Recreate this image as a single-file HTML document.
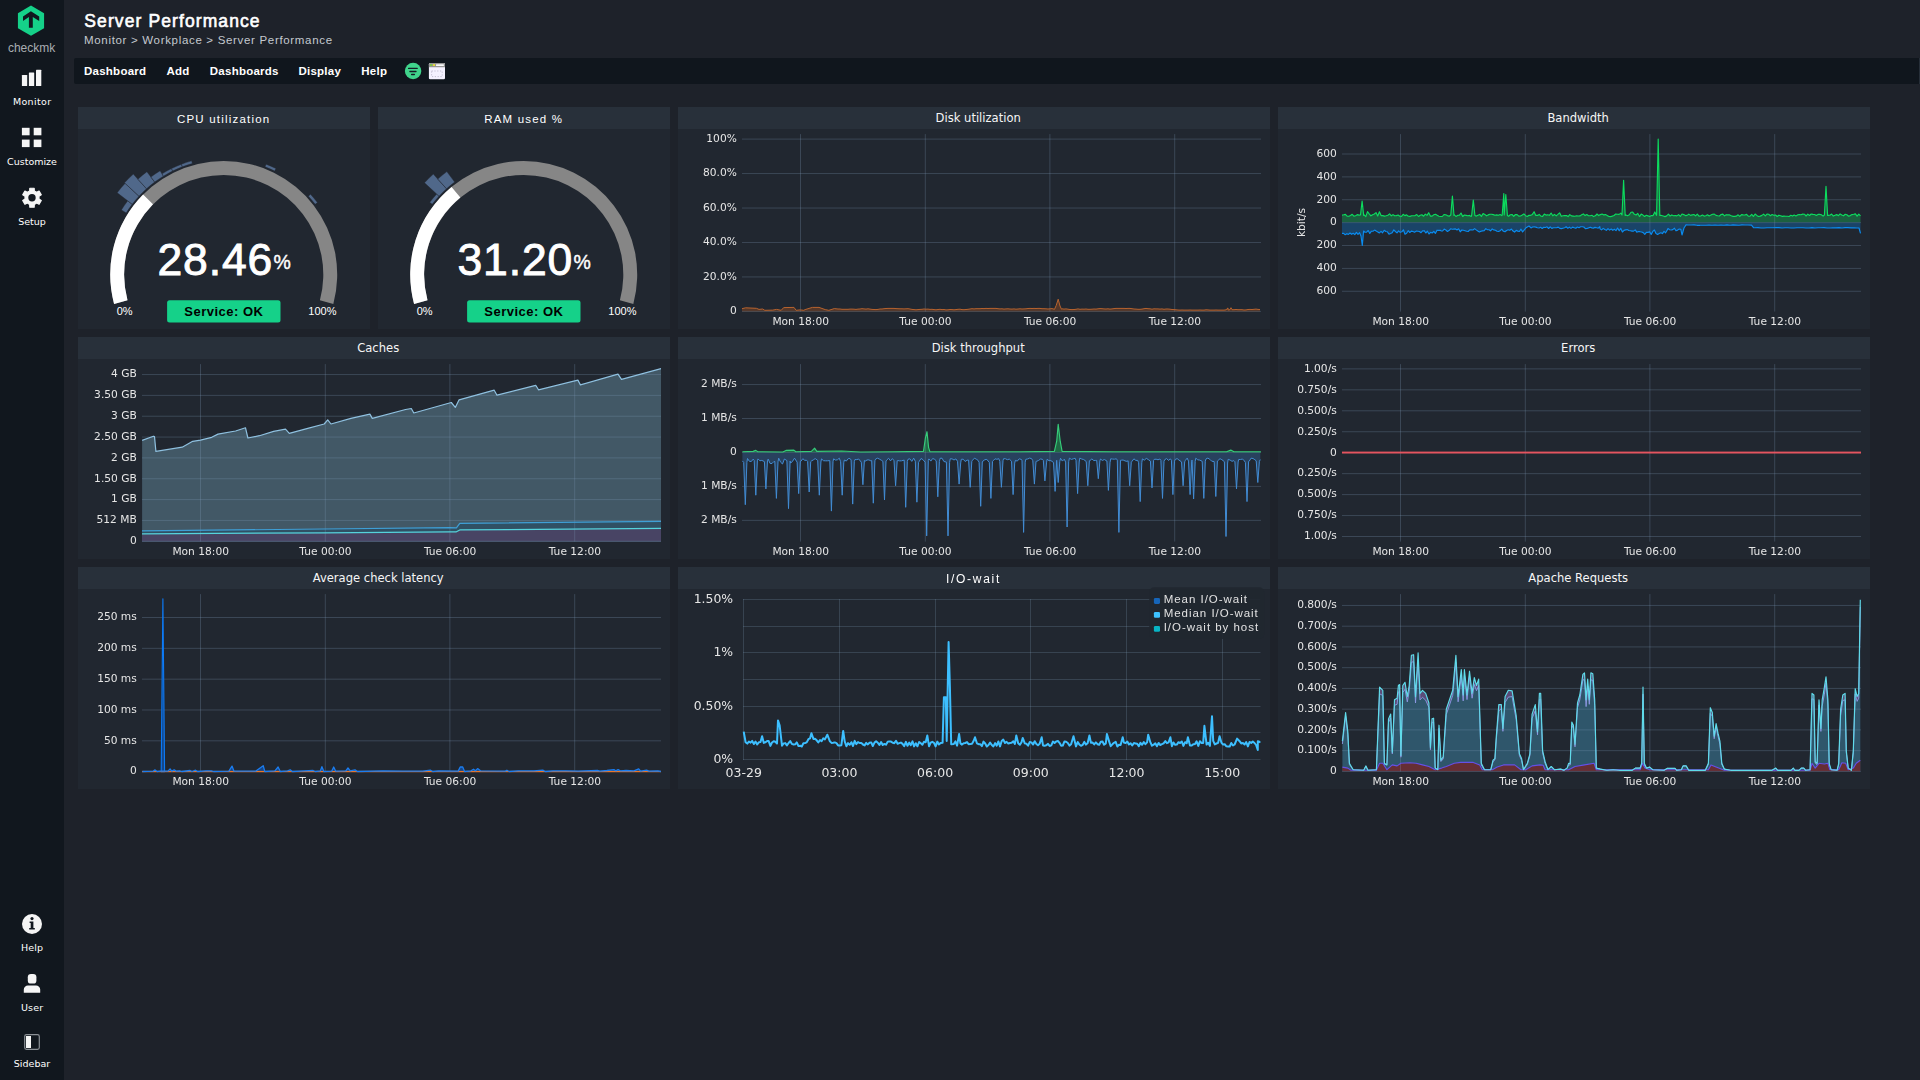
<!DOCTYPE html>
<html lang="en"><head><meta charset="utf-8"><title>Server Performance</title>
<style>
html,body{margin:0;padding:0;}
body{width:1920px;height:1080px;overflow:hidden;background:#1e222a;position:relative;font-family:"Liberation Sans", sans-serif;color:#fff;}
.abs{position:absolute;}
#side{left:0;top:0;width:64px;height:1080px;background:#11171e;}
.sl{position:absolute;left:0;width:64px;text-align:center;font-family:"DejaVu Sans", sans-serif;font-size:9.5px;line-height:12px;color:#fff;letter-spacing:0;}
#title{left:84.3px;top:9.6px;font-size:17.5px;line-height:22px;font-weight:normal;-webkit-text-stroke:0.6px #fff;letter-spacing:1.1px;white-space:nowrap;}
#crumb{left:84px;top:33px;font-size:11.5px;line-height:14px;color:#c4c9cf;letter-spacing:0.68px;white-space:nowrap;}
#menu{left:74px;top:58px;width:1844.8px;height:26px;background:#10161d;border-radius:2px 0 0 2px;}
.mi{position:absolute;top:64px;font-size:11.5px;line-height:14px;font-weight:bold;letter-spacing:0.25px;white-space:nowrap;}
.dl{position:absolute;background:#212730;}
.dt{position:absolute;left:0;top:0;right:0;height:22px;background:#28303a;line-height:22px;text-align:center;text-indent:8.4px;font-family:"DejaVu Sans",sans-serif;font-size:11.55px;color:#f6f6f6;white-space:nowrap;}
svg{position:absolute;left:0;top:0;}
.gt{position:absolute;width:600.4px;height:22px;line-height:22px;text-align:center;font-family:"DejaVu Sans", sans-serif;font-size:11.55px;color:#f6f6f6;white-space:nowrap;}
svg.cv{will-change:transform;}

</style></head><body>
<div id="side" class="abs"></div>
<div class="sl" style="top:96.0px;letter-spacing:0.35px;text-indent:0.35px">Monitor</div>
<div class="sl" style="top:156.0px;letter-spacing:0.00px;text-indent:0.00px">Customize</div>
<div class="sl" style="top:216.0px;letter-spacing:0.00px;text-indent:0.00px">Setup</div>
<div class="sl" style="top:942.0px;letter-spacing:0.15px;text-indent:0.15px">Help</div>
<div class="sl" style="top:1002.0px;letter-spacing:0.15px;text-indent:0.15px">User</div>
<div class="sl" style="top:1058.0px;letter-spacing:0.00px;text-indent:0.00px">Sidebar</div>
<div id="title" class="abs">Server Performance</div>
<div id="crumb" class="abs">Monitor &gt; Workplace &gt; Server Performance</div>
<div id="menu" class="abs"></div>
<div class="abs" style="left:1919px;top:58px;width:1px;height:26px;background:#262e38"></div>
<div class="mi" style="left:84.0px">Dashboard</div>
<div class="mi" style="left:166.5px">Add</div>
<div class="mi" style="left:209.8px">Dashboards</div>
<div class="mi" style="left:298.4px">Display</div>
<div class="mi" style="left:361.3px">Help</div>
<div class="dl" style="left:78px;top:107px;width:292px;height:222px"><div class="dt"></div></div>
<div class="dl" style="left:378px;top:107px;width:292px;height:222px"><div class="dt"></div></div>
<div class="dl" style="left:678px;top:107px;width:592px;height:222px"><div class="dt">Disk utilization</div></div>
<div class="dl" style="left:1278px;top:107px;width:592px;height:222px"><div class="dt">Bandwidth</div></div>
<div class="dl" style="left:78px;top:337px;width:592px;height:222px"><div class="dt">Caches</div></div>
<div class="dl" style="left:678px;top:337px;width:592px;height:222px"><div class="dt">Disk throughput</div></div>
<div class="dl" style="left:1278px;top:337px;width:592px;height:222px"><div class="dt">Errors</div></div>
<div class="dl" style="left:78px;top:567px;width:592px;height:222px"><div class="dt">Average check latency</div></div>
<div class="dl" style="left:678px;top:567px;width:592px;height:222px"><div class="dt"></div></div>
<div class="dl" style="left:1278px;top:567px;width:592px;height:222px"><div class="dt">Apache Requests</div></div>
<svg width="1920" height="1080" viewBox="0 0 1920 1080">
<polygon points="31.00,5.60 44.08,13.15 44.08,28.25 31.00,35.80 17.92,28.25 17.92,13.15" fill="#15d189"/>
<path d="M23,16.6 L30.9,11.3 L39.2,16.6 L39.2,20.9 L32.8,16.9 L32.8,27.8 L28.9,27.8 L28.9,16.9 L23,20.9 Z" fill="#11171e"/>
<text x="31.60" y="51.80" font-family='"Liberation Sans", sans-serif' font-size="12" text-anchor="middle" fill="#a9adb2" font-weight="normal" >checkmk</text>
<rect x="21.9" y="75.0" width="5.3" height="11.1" rx="0.6" fill="#f5f5f5"/>
<rect x="28.9" y="72.5" width="5.3" height="13.6" rx="0.6" fill="#f5f5f5"/>
<rect x="36.0" y="69.7" width="5.3" height="16.4" rx="0.6" fill="#f5f5f5"/>
<rect x="21.9" y="127.8" width="7.7" height="7.5" fill="#f5f5f5"/>
<rect x="21.9" y="139.6" width="7.7" height="7.5" fill="#f5f5f5"/>
<rect x="33.7" y="127.8" width="7.7" height="7.5" fill="#f5f5f5"/>
<rect x="33.7" y="139.6" width="7.7" height="7.5" fill="#f5f5f5"/>
<polygon points="29.69,190.99 29.82,188.25 34.18,188.25 34.31,190.99 36.66,192.34 39.09,191.08 41.28,194.86 38.97,196.35 38.97,199.05 41.28,200.54 39.09,204.32 36.66,203.06 34.31,204.41 34.18,207.15 29.82,207.15 29.69,204.41 27.34,203.06 24.91,204.32 22.72,200.54 25.03,199.05 25.03,196.35 22.72,194.86 24.91,191.08 27.34,192.34" fill="#f5f5f5" stroke="#f5f5f5" stroke-width="1.2" stroke-linejoin="round"/>
<circle cx="32.0" cy="197.7" r="3.7" fill="#11171e"/>
<circle cx="32" cy="924" r="10" fill="#f5f5f5"/>
<circle cx="32" cy="918.6" r="1.6" fill="#11171e"/>
<path d="M29.6,921.6 h3.8 v6.3 h1.4 v1.5 h-5.6 v-1.5 h1.5 v-4.8 h-1.1 z" fill="#11171e"/>
<rect x="27.8" y="974" width="8.6" height="9.6" rx="3.2" fill="#f5f5f5"/>
<path d="M23.8,992.8 v-3.2 a4.2,4.2 0 0 1 4.2,-4.2 h8 a4.2,4.2 0 0 1 4.2,4.2 v3.2 z" fill="#f5f5f5"/>
<rect x="24.7" y="1034.7" width="14.6" height="14.6" rx="1.8" fill="none" stroke="#8a8f95" stroke-width="1.2"/>
<rect x="26" y="1036" width="5" height="12" fill="#f5f5f5"/>
<circle cx="413.1" cy="71" r="8.2" fill="#40d48c"/>
<line x1="408.6" y1="68.4" x2="417.2" y2="68.4" stroke="#161d26" stroke-width="1.3" stroke-linecap="round"/>
<line x1="409.9" y1="71.5" x2="416.0" y2="71.5" stroke="#161d26" stroke-width="1.3" stroke-linecap="round"/>
<line x1="411.6" y1="74.5" x2="414.4" y2="74.5" stroke="#161d26" stroke-width="1.3" stroke-linecap="round"/>
<rect x="428.9" y="63" width="16.1" height="16.3" rx="1.3" fill="#f4f1ff"/>
<path d="M428.9,67.2 v-2.9 a1.3,1.3 0 0 1 1.3,-1.3 h13.5 a1.3,1.3 0 0 1 1.3,1.3 v2.9 z" fill="#969696"/>
<rect x="430" y="64.1" width="2.1" height="1.9" fill="#7bc24a"/>
<rect x="432.9" y="64.1" width="2.2" height="1.9" fill="#e8d93c"/>
<rect x="436" y="64.2" width="7.9" height="1.8" rx="0.5" fill="#f8f8f8"/>
<rect x="431.6" y="71" width="10.6" height="5.6" fill="none" stroke="#bdb9cc" stroke-width="0.9" stroke-dasharray="1.2,1.6"/>
<path d="M114.07,303.88 A113.50,113.50 0 1 1 333.33,303.88 L319.91,300.28 A99.60,99.60 0 1 0 127.49,300.28 Z" fill="#868686"/>
<path d="M114.07,303.88 A113.50,113.50 0 0 1 143.12,194.57 L152.99,204.36 A99.60,99.60 0 0 0 127.49,300.28 Z" fill="#ffffff"/>
<path d="M121.37,209.93 A121.00,121.00 0 0 1 127.70,200.84 L132.23,204.31 A115.30,115.30 0 0 0 126.19,212.97 Z" fill="#50688a" stroke="#212730" stroke-width="0.45"/>
<path d="M117.15,192.74 A134.30,134.30 0 0 1 125.08,183.34 L139.03,196.23 A115.30,115.30 0 0 0 132.23,204.31 Z" fill="#50688a" stroke="#212730" stroke-width="0.45"/>
<path d="M124.49,182.79 A135.10,135.10 0 0 1 133.30,174.10 L146.55,188.82 A115.30,115.30 0 0 0 139.03,196.23 Z" fill="#50688a" stroke="#212730" stroke-width="0.45"/>
<path d="M137.85,179.15 A128.30,128.30 0 0 1 146.93,171.70 L154.71,182.12 A115.30,115.30 0 0 0 146.55,188.82 Z" fill="#50688a" stroke="#212730" stroke-width="0.45"/>
<path d="M150.88,176.99 A121.70,121.70 0 0 1 160.11,170.73 L163.46,176.19 A115.30,115.30 0 0 0 154.71,182.12 Z" fill="#50688a" stroke="#212730" stroke-width="0.45"/>
<path d="M161.99,173.80 A118.10,118.10 0 0 1 171.47,168.58 L172.70,171.09 A115.30,115.30 0 0 0 163.46,176.19 Z" fill="#50688a" stroke="#212730" stroke-width="0.45"/>
<path d="M171.47,168.58 A118.10,118.10 0 0 1 181.38,164.24 L182.38,166.86 A115.30,115.30 0 0 0 172.70,171.09 Z" fill="#50688a" stroke="#212730" stroke-width="0.45"/>
<path d="M181.38,164.24 A118.10,118.10 0 0 1 191.64,160.83 L192.40,163.53 A115.30,115.30 0 0 0 182.38,166.86 Z" fill="#50688a" stroke="#212730" stroke-width="0.45"/>
<path d="M266.06,164.15 A118.20,118.20 0 0 1 275.98,168.49 L274.70,171.09 A115.30,115.30 0 0 0 265.02,166.86 Z" fill="#50688a" stroke="#212730" stroke-width="0.45"/>
<path d="M310.50,194.27 A118.20,118.20 0 0 1 317.47,202.54 L315.17,204.31 A115.30,115.30 0 0 0 308.37,196.23 Z" fill="#50688a" stroke="#212730" stroke-width="0.45"/>
<text x="157.4" y="275.2" font-family='"Liberation Sans", sans-serif' font-size="44.5" fill="#fff" stroke="#fff" stroke-width="0.9" text-anchor="start" letter-spacing="0.9">28.46<tspan font-size="19.5" dx="0.3" dy="-6.4" letter-spacing="0" stroke-width="0.4">%</tspan></text>
<text x="124.70" y="314.90" font-family='"Liberation Sans", sans-serif' font-size="11" text-anchor="middle" fill="#fff" font-weight="normal" >0%</text>
<text x="322.40" y="314.90" font-family='"Liberation Sans", sans-serif' font-size="11" text-anchor="middle" fill="#fff" font-weight="normal" >100%</text>
<rect x="167.1" y="300.2" width="113.4" height="22.2" rx="2.5" fill="#15d189"/>
<text x="223.90" y="315.80" font-family='"Liberation Sans", sans-serif' font-size="13" text-anchor="middle" fill="#000" font-weight="bold" letter-spacing="0.5">Service: OK</text>
<path d="M414.07,303.88 A113.50,113.50 0 1 1 633.33,303.88 L619.91,300.28 A99.60,99.60 0 1 0 427.49,300.28 Z" fill="#868686"/>
<path d="M414.07,303.88 A113.50,113.50 0 0 1 451.54,186.90 L460.37,197.62 A99.60,99.60 0 0 0 427.49,300.28 Z" fill="#ffffff"/>
<path d="M429.69,202.36 A118.50,118.50 0 0 1 436.68,194.06 L439.03,196.23 A115.30,115.30 0 0 0 432.23,204.31 Z" fill="#50688a" stroke="#212730" stroke-width="0.45"/>
<path d="M424.49,182.79 A135.10,135.10 0 0 1 433.30,174.10 L446.55,188.82 A115.30,115.30 0 0 0 439.03,196.23 Z" fill="#50688a" stroke="#212730" stroke-width="0.45"/>
<path d="M437.78,179.08 A128.40,128.40 0 0 1 446.88,171.62 L454.71,182.12 A115.30,115.30 0 0 0 446.55,188.82 Z" fill="#50688a" stroke="#212730" stroke-width="0.45"/>
<text x="457.4" y="275.2" font-family='"Liberation Sans", sans-serif' font-size="44.5" fill="#fff" stroke="#fff" stroke-width="0.9" text-anchor="start" letter-spacing="0.9">31.20<tspan font-size="19.5" dx="0.3" dy="-6.4" letter-spacing="0" stroke-width="0.4">%</tspan></text>
<text x="424.70" y="314.90" font-family='"Liberation Sans", sans-serif' font-size="11" text-anchor="middle" fill="#fff" font-weight="normal" >0%</text>
<text x="622.40" y="314.90" font-family='"Liberation Sans", sans-serif' font-size="11" text-anchor="middle" fill="#fff" font-weight="normal" >100%</text>
<rect x="467.1" y="300.2" width="113.4" height="22.2" rx="2.5" fill="#15d189"/>
<text x="523.90" y="315.80" font-family='"Liberation Sans", sans-serif' font-size="13" text-anchor="middle" fill="#000" font-weight="bold" letter-spacing="0.5">Service: OK</text>
<text x="223.70" y="122.80" font-family='"Liberation Sans", sans-serif' font-size="11.5" text-anchor="middle" fill="#fff" font-weight="normal" letter-spacing="1.2">CPU utilization</text>
<text x="523.70" y="122.80" font-family='"Liberation Sans", sans-serif' font-size="11.5" text-anchor="middle" fill="#fff" font-weight="normal" letter-spacing="1.2">RAM used %</text>

</svg>
<svg class="cv" width="1920" height="1080" viewBox="0 0 1920 1080">
<text x="800.70" y="324.60" font-family='"DejaVu Sans", sans-serif' font-size="10.667" text-anchor="middle" fill="#e6e6e6" font-weight="normal" >Mon 18:00</text>
<text x="925.50" y="324.60" font-family='"DejaVu Sans", sans-serif' font-size="10.667" text-anchor="middle" fill="#e6e6e6" font-weight="normal" >Tue 00:00</text>
<text x="1050.10" y="324.60" font-family='"DejaVu Sans", sans-serif' font-size="10.667" text-anchor="middle" fill="#e6e6e6" font-weight="normal" >Tue 06:00</text>
<text x="1174.90" y="324.60" font-family='"DejaVu Sans", sans-serif' font-size="10.667" text-anchor="middle" fill="#e6e6e6" font-weight="normal" >Tue 12:00</text>
<text x="736.80" y="141.90" font-family='"DejaVu Sans", sans-serif' font-size="10.667" text-anchor="end" fill="#e6e6e6" font-weight="normal" >100%</text>
<text x="736.80" y="176.36" font-family='"DejaVu Sans", sans-serif' font-size="10.667" text-anchor="end" fill="#e6e6e6" font-weight="normal" >80.0%</text>
<text x="736.80" y="210.82" font-family='"DejaVu Sans", sans-serif' font-size="10.667" text-anchor="end" fill="#e6e6e6" font-weight="normal" >60.0%</text>
<text x="736.80" y="245.28" font-family='"DejaVu Sans", sans-serif' font-size="10.667" text-anchor="end" fill="#e6e6e6" font-weight="normal" >40.0%</text>
<text x="736.80" y="279.74" font-family='"DejaVu Sans", sans-serif' font-size="10.667" text-anchor="end" fill="#e6e6e6" font-weight="normal" >20.0%</text>
<text x="736.80" y="313.70" font-family='"DejaVu Sans", sans-serif' font-size="10.667" text-anchor="end" fill="#e6e6e6" font-weight="normal" >0</text>
<polygon points="742.0,311.4 742.0,308.7 745.5,307.8 756.4,308.3 759.0,309.4 762.6,309.0 764.8,310.3 772.8,310.1 776.5,309.4 781.2,310.3 783.7,307.6 794.0,307.4 796.1,310.3 800.2,309.9 803.8,310.3 805.1,309.6 812.4,307.4 819.0,307.4 825.2,309.6 828.8,310.3 834.3,308.6 838.0,309.0 840.0,309.0 842.0,309.3 844.0,309.3 846.0,309.3 848.0,309.3 850.0,309.1 852.0,309.1 854.0,309.2 856.0,309.4 858.0,309.1 860.0,309.0 862.0,308.7 864.0,308.9 866.0,309.1 868.0,308.8 870.0,309.1 872.0,309.4 874.0,309.5 876.0,309.6 878.0,309.4 880.0,309.0 882.0,309.0 884.0,308.7 886.0,308.5 888.0,308.4 890.0,308.4 892.0,308.4 894.0,308.4 896.0,308.6 898.0,308.7 900.0,308.8 902.0,308.8 904.0,308.9 906.0,308.8 908.0,308.7 910.0,309.0 912.0,309.4 914.0,309.6 916.0,309.8 918.0,309.6 920.0,309.4 922.0,309.3 924.0,309.0 926.0,309.2 928.0,309.1 930.0,309.4 932.0,309.3 934.0,309.6 936.0,309.8 938.0,309.5 940.0,309.3 942.0,309.6 944.0,309.5 946.0,309.9 948.0,309.8 950.0,309.5 952.0,309.6 954.0,309.8 956.0,309.6 958.0,309.3 960.0,309.2 962.0,309.6 964.0,309.7 966.0,309.5 968.0,309.3 970.0,309.0 972.0,308.7 974.0,308.9 976.0,308.7 978.0,308.7 980.0,308.7 982.0,308.5 984.0,308.6 986.0,308.4 988.0,308.5 990.0,308.4 992.0,308.4 994.0,308.4 996.0,308.4 998.0,308.7 1000.0,308.9 1002.0,308.8 1004.0,309.1 1006.0,308.9 1008.0,308.8 1010.0,309.0 1012.0,309.1 1014.0,308.9 1016.0,309.2 1018.0,309.0 1020.0,308.8 1022.0,309.0 1024.0,308.9 1026.0,308.8 1028.0,308.5 1030.0,308.4 1032.0,308.5 1034.0,308.4 1036.0,308.5 1038.0,308.4 1040.0,308.4 1042.0,308.7 1044.0,308.7 1046.0,308.8 1048.0,309.0 1050.0,308.8 1052.0,308.6 1054.5,309.3 1056.2,305.5 1058.2,299.2 1060.0,306.0 1061.5,309.2 1062.0,308.8 1064.0,309.1 1066.0,308.9 1068.0,309.2 1070.0,309.5 1072.0,309.6 1074.0,309.5 1076.0,309.3 1078.0,308.9 1080.0,309.3 1082.0,309.1 1084.0,309.2 1086.0,309.0 1088.0,309.3 1090.0,309.3 1092.0,309.2 1094.0,309.0 1096.0,309.1 1098.0,308.8 1100.0,308.6 1102.0,308.7 1104.0,308.9 1106.0,309.0 1108.0,308.8 1110.0,309.1 1112.0,308.9 1114.0,308.6 1116.0,308.4 1118.0,308.4 1120.0,308.4 1122.0,308.4 1124.0,308.4 1126.0,308.5 1128.0,308.4 1130.0,308.4 1132.0,308.7 1134.0,309.0 1136.0,309.1 1138.0,309.3 1140.0,309.3 1142.0,309.1 1144.0,308.7 1146.0,308.4 1148.0,308.7 1150.0,308.8 1152.0,309.2 1154.0,308.8 1156.0,308.9 1158.0,308.9 1160.0,309.1 1162.0,308.9 1164.0,309.3 1166.0,309.0 1168.0,309.0 1170.0,309.2 1172.0,309.5 1174.0,309.6 1176.0,309.8 1178.0,310.0 1180.0,310.1 1182.0,310.0 1184.0,310.1 1186.0,310.1 1188.0,310.1 1190.0,310.0 1192.0,310.1 1194.0,310.1 1196.0,310.1 1198.0,310.1 1200.0,310.0 1202.0,310.1 1204.0,310.1 1206.0,309.8 1208.0,309.9 1210.0,310.1 1212.0,310.1 1214.0,310.1 1216.0,310.0 1218.0,310.1 1220.0,310.1 1222.0,310.1 1224.0,310.1 1226.0,309.8 1228.0,307.9 1228.0,310.0 1230.0,309.7 1231.0,307.7 1232.0,309.7 1234.0,309.7 1236.0,309.5 1238.0,309.7 1240.0,309.7 1242.0,309.7 1244.0,310.0 1246.0,309.9 1248.0,309.5 1250.0,309.4 1252.0,309.5 1254.0,309.3 1256.0,309.1 1258.0,309.4 1260.0,309.5 1260.0,311.4" fill="#6b3e27" fill-opacity="0.7"/>
<line x1="800.50" y1="134.1" x2="800.50" y2="311.6" stroke="rgba(130,160,190,0.27)" stroke-width="1"/>
<line x1="925.30" y1="134.1" x2="925.30" y2="311.6" stroke="rgba(130,160,190,0.27)" stroke-width="1"/>
<line x1="1049.90" y1="134.1" x2="1049.90" y2="311.6" stroke="rgba(130,160,190,0.27)" stroke-width="1"/>
<line x1="1174.70" y1="134.1" x2="1174.70" y2="311.6" stroke="rgba(130,160,190,0.27)" stroke-width="1"/>
<line x1="742" y1="139.10" x2="1261" y2="139.10" stroke="rgba(130,160,190,0.27)" stroke-width="1"/>
<line x1="742" y1="173.56" x2="1261" y2="173.56" stroke="rgba(130,160,190,0.27)" stroke-width="1"/>
<line x1="742" y1="208.02" x2="1261" y2="208.02" stroke="rgba(130,160,190,0.27)" stroke-width="1"/>
<line x1="742" y1="242.48" x2="1261" y2="242.48" stroke="rgba(130,160,190,0.27)" stroke-width="1"/>
<line x1="742" y1="276.94" x2="1261" y2="276.94" stroke="rgba(130,160,190,0.27)" stroke-width="1"/>
<line x1="742" y1="311.40" x2="1261" y2="311.40" stroke="rgba(130,160,190,0.27)" stroke-width="1"/>
<polyline points="742.0,308.7 745.5,307.8 756.4,308.3 759.0,309.4 762.6,309.0 764.8,310.3 772.8,310.1 776.5,309.4 781.2,310.3 783.7,307.6 794.0,307.4 796.1,310.3 800.2,309.9 803.8,310.3 805.1,309.6 812.4,307.4 819.0,307.4 825.2,309.6 828.8,310.3 834.3,308.6 838.0,309.0 840.0,309.0 842.0,309.3 844.0,309.3 846.0,309.3 848.0,309.3 850.0,309.1 852.0,309.1 854.0,309.2 856.0,309.4 858.0,309.1 860.0,309.0 862.0,308.7 864.0,308.9 866.0,309.1 868.0,308.8 870.0,309.1 872.0,309.4 874.0,309.5 876.0,309.6 878.0,309.4 880.0,309.0 882.0,309.0 884.0,308.7 886.0,308.5 888.0,308.4 890.0,308.4 892.0,308.4 894.0,308.4 896.0,308.6 898.0,308.7 900.0,308.8 902.0,308.8 904.0,308.9 906.0,308.8 908.0,308.7 910.0,309.0 912.0,309.4 914.0,309.6 916.0,309.8 918.0,309.6 920.0,309.4 922.0,309.3 924.0,309.0 926.0,309.2 928.0,309.1 930.0,309.4 932.0,309.3 934.0,309.6 936.0,309.8 938.0,309.5 940.0,309.3 942.0,309.6 944.0,309.5 946.0,309.9 948.0,309.8 950.0,309.5 952.0,309.6 954.0,309.8 956.0,309.6 958.0,309.3 960.0,309.2 962.0,309.6 964.0,309.7 966.0,309.5 968.0,309.3 970.0,309.0 972.0,308.7 974.0,308.9 976.0,308.7 978.0,308.7 980.0,308.7 982.0,308.5 984.0,308.6 986.0,308.4 988.0,308.5 990.0,308.4 992.0,308.4 994.0,308.4 996.0,308.4 998.0,308.7 1000.0,308.9 1002.0,308.8 1004.0,309.1 1006.0,308.9 1008.0,308.8 1010.0,309.0 1012.0,309.1 1014.0,308.9 1016.0,309.2 1018.0,309.0 1020.0,308.8 1022.0,309.0 1024.0,308.9 1026.0,308.8 1028.0,308.5 1030.0,308.4 1032.0,308.5 1034.0,308.4 1036.0,308.5 1038.0,308.4 1040.0,308.4 1042.0,308.7 1044.0,308.7 1046.0,308.8 1048.0,309.0 1050.0,308.8 1052.0,308.6 1054.5,309.3 1056.2,305.5 1058.2,299.2 1060.0,306.0 1061.5,309.2 1062.0,308.8 1064.0,309.1 1066.0,308.9 1068.0,309.2 1070.0,309.5 1072.0,309.6 1074.0,309.5 1076.0,309.3 1078.0,308.9 1080.0,309.3 1082.0,309.1 1084.0,309.2 1086.0,309.0 1088.0,309.3 1090.0,309.3 1092.0,309.2 1094.0,309.0 1096.0,309.1 1098.0,308.8 1100.0,308.6 1102.0,308.7 1104.0,308.9 1106.0,309.0 1108.0,308.8 1110.0,309.1 1112.0,308.9 1114.0,308.6 1116.0,308.4 1118.0,308.4 1120.0,308.4 1122.0,308.4 1124.0,308.4 1126.0,308.5 1128.0,308.4 1130.0,308.4 1132.0,308.7 1134.0,309.0 1136.0,309.1 1138.0,309.3 1140.0,309.3 1142.0,309.1 1144.0,308.7 1146.0,308.4 1148.0,308.7 1150.0,308.8 1152.0,309.2 1154.0,308.8 1156.0,308.9 1158.0,308.9 1160.0,309.1 1162.0,308.9 1164.0,309.3 1166.0,309.0 1168.0,309.0 1170.0,309.2 1172.0,309.5 1174.0,309.6 1176.0,309.8 1178.0,310.0 1180.0,310.1 1182.0,310.0 1184.0,310.1 1186.0,310.1 1188.0,310.1 1190.0,310.0 1192.0,310.1 1194.0,310.1 1196.0,310.1 1198.0,310.1 1200.0,310.0 1202.0,310.1 1204.0,310.1 1206.0,309.8 1208.0,309.9 1210.0,310.1 1212.0,310.1 1214.0,310.1 1216.0,310.0 1218.0,310.1 1220.0,310.1 1222.0,310.1 1224.0,310.1 1226.0,309.8 1228.0,307.9 1228.0,310.0 1230.0,309.7 1231.0,307.7 1232.0,309.7 1234.0,309.7 1236.0,309.5 1238.0,309.7 1240.0,309.7 1242.0,309.7 1244.0,310.0 1246.0,309.9 1248.0,309.5 1250.0,309.4 1252.0,309.5 1254.0,309.3 1256.0,309.1 1258.0,309.4 1260.0,309.5" fill="none" stroke="#b8642f" stroke-width="1.0" stroke-linejoin="round" />
<text x="1400.70" y="324.60" font-family='"DejaVu Sans", sans-serif' font-size="10.667" text-anchor="middle" fill="#e6e6e6" font-weight="normal" >Mon 18:00</text>
<text x="1525.50" y="324.60" font-family='"DejaVu Sans", sans-serif' font-size="10.667" text-anchor="middle" fill="#e6e6e6" font-weight="normal" >Tue 00:00</text>
<text x="1650.10" y="324.60" font-family='"DejaVu Sans", sans-serif' font-size="10.667" text-anchor="middle" fill="#e6e6e6" font-weight="normal" >Tue 06:00</text>
<text x="1774.90" y="324.60" font-family='"DejaVu Sans", sans-serif' font-size="10.667" text-anchor="middle" fill="#e6e6e6" font-weight="normal" >Tue 12:00</text>
<text x="1336.80" y="156.80" font-family='"DejaVu Sans", sans-serif' font-size="10.667" text-anchor="end" fill="#e6e6e6" font-weight="normal" >600</text>
<text x="1336.80" y="179.68" font-family='"DejaVu Sans", sans-serif' font-size="10.667" text-anchor="end" fill="#e6e6e6" font-weight="normal" >400</text>
<text x="1336.80" y="202.56" font-family='"DejaVu Sans", sans-serif' font-size="10.667" text-anchor="end" fill="#e6e6e6" font-weight="normal" >200</text>
<text x="1336.80" y="225.44" font-family='"DejaVu Sans", sans-serif' font-size="10.667" text-anchor="end" fill="#e6e6e6" font-weight="normal" >0</text>
<text x="1336.80" y="248.32" font-family='"DejaVu Sans", sans-serif' font-size="10.667" text-anchor="end" fill="#e6e6e6" font-weight="normal" >200</text>
<text x="1336.80" y="271.20" font-family='"DejaVu Sans", sans-serif' font-size="10.667" text-anchor="end" fill="#e6e6e6" font-weight="normal" >400</text>
<text x="1336.80" y="294.08" font-family='"DejaVu Sans", sans-serif' font-size="10.667" text-anchor="end" fill="#e6e6e6" font-weight="normal" >600</text>
<text transform="translate(1305.3,222.5) rotate(-90)" font-family='"DejaVu Sans", sans-serif' font-size="10.667" text-anchor="middle" fill="#e6e6e6">kbit/s</text>
<polygon points="1342.0,222.6 1342.0,215.1 1343.7,214.8 1345.4,214.4 1347.1,216.1 1348.8,216.3 1350.5,215.5 1352.2,214.3 1353.9,216.2 1355.6,215.8 1357.3,214.6 1359.0,215.1 1360.5,215.0 1362.1,201.0 1363.7,215.5 1364.1,214.8 1365.8,216.6 1367.5,211.6 1369.2,213.8 1370.9,215.8 1372.6,214.7 1374.3,214.0 1376.0,212.6 1377.7,216.1 1379.4,211.8 1381.1,215.6 1382.8,215.6 1384.5,216.1 1386.2,215.7 1387.9,215.2 1389.6,213.9 1391.3,215.8 1393.0,214.6 1394.7,215.8 1396.4,215.6 1398.1,215.0 1399.8,216.3 1401.5,216.4 1403.2,214.3 1404.9,215.6 1406.6,214.9 1408.3,216.3 1410.0,216.4 1411.7,215.7 1413.4,215.8 1415.1,215.6 1416.8,214.5 1418.5,216.5 1420.2,215.3 1421.9,214.8 1423.6,216.2 1425.3,214.1 1427.0,215.4 1428.7,212.7 1430.4,216.1 1432.1,216.1 1433.8,214.8 1435.5,214.3 1437.2,215.3 1438.9,216.2 1440.6,216.5 1442.3,216.5 1444.0,214.5 1445.7,214.7 1447.4,215.6 1449.1,216.2 1450.8,215.0 1452.4,196.0 1454.0,215.5 1454.2,214.5 1455.9,216.5 1457.6,215.4 1459.3,215.3 1461.0,213.0 1462.7,216.5 1464.4,215.0 1466.1,215.4 1467.8,215.8 1469.5,215.4 1471.2,216.5 1471.7,215.0 1473.3,200.0 1474.9,215.5 1476.3,216.1 1478.0,215.2 1479.7,214.4 1481.4,216.4 1483.1,213.5 1484.8,214.4 1486.5,215.8 1488.2,214.9 1489.9,214.2 1491.6,214.2 1493.3,214.6 1495.0,215.3 1496.7,214.9 1498.4,215.3 1500.1,214.5 1501.8,215.6 1502.2,215.0 1503.8,193.5 1504.2,215.0 1505.8,194.5 1507.4,215.5 1508.6,216.3 1510.3,214.8 1512.0,214.5 1513.7,216.3 1515.4,214.5 1517.1,214.6 1518.8,216.1 1520.5,216.0 1522.2,215.0 1523.9,213.9 1525.6,215.7 1527.3,216.5 1529.0,215.3 1530.7,215.3 1532.4,214.4 1534.1,211.7 1535.8,215.4 1537.5,215.4 1539.2,214.4 1540.9,216.2 1542.6,216.4 1544.3,214.1 1546.0,215.1 1547.7,214.8 1549.4,215.3 1551.1,213.0 1552.8,215.8 1554.5,214.4 1556.2,215.9 1557.9,214.4 1559.6,212.8 1561.3,216.3 1563.0,215.8 1564.7,215.6 1566.4,215.5 1568.1,216.6 1569.8,214.6 1571.5,215.9 1573.2,216.1 1574.9,216.3 1576.6,215.8 1578.3,216.0 1580.0,215.9 1581.7,214.8 1583.4,213.9 1585.1,215.6 1586.8,214.5 1588.5,215.7 1590.2,215.7 1591.9,215.3 1593.6,216.6 1595.3,215.8 1597.0,214.0 1598.7,215.6 1600.4,214.6 1602.1,214.0 1603.8,214.9 1605.5,214.6 1607.2,215.4 1608.9,216.5 1610.6,216.6 1612.3,216.1 1614.0,215.5 1615.7,214.0 1617.4,214.3 1619.1,214.4 1620.8,213.1 1622.0,215.0 1623.6,180.4 1625.2,215.5 1625.9,214.9 1627.6,215.7 1629.3,214.7 1631.0,212.2 1632.7,212.1 1634.4,214.3 1636.1,215.0 1637.8,213.4 1639.5,216.6 1641.2,214.1 1642.9,215.1 1644.6,216.5 1646.3,215.3 1648.0,215.9 1649.7,216.5 1651.4,215.5 1653.1,215.6 1654.8,211.9 1656.5,215.3 1656.6,215.0 1658.2,139.0 1659.8,215.5 1659.9,215.1 1661.6,215.5 1663.3,216.0 1665.0,216.6 1666.7,215.9 1668.4,214.2 1670.1,216.0 1671.8,214.9 1673.5,215.7 1675.2,215.5 1676.9,215.9 1678.6,214.6 1680.3,216.4 1682.0,214.0 1683.7,214.6 1685.4,215.6 1687.1,215.4 1688.8,214.1 1690.5,215.4 1692.2,214.9 1693.9,214.5 1695.6,215.9 1697.3,214.1 1699.0,216.1 1700.7,216.0 1702.4,215.0 1704.1,216.1 1705.8,215.7 1707.5,214.8 1709.2,215.9 1710.9,215.1 1712.6,214.2 1714.3,214.1 1716.0,215.4 1717.7,215.8 1719.4,216.0 1721.1,214.5 1722.8,214.1 1724.5,215.9 1726.2,214.7 1727.9,214.9 1729.6,214.9 1731.3,215.8 1733.0,216.4 1734.7,216.4 1736.4,216.1 1738.1,214.8 1739.8,216.4 1741.5,214.6 1743.2,214.9 1744.9,215.0 1746.6,214.4 1748.3,216.1 1750.0,216.2 1751.7,214.4 1753.4,216.3 1755.1,214.0 1756.8,215.4 1758.5,216.5 1760.2,216.1 1761.9,215.4 1763.6,214.1 1765.3,215.9 1767.0,214.1 1768.7,214.3 1770.4,215.7 1772.1,214.5 1773.8,215.3 1775.5,215.0 1777.2,216.5 1778.9,215.2 1780.6,215.8 1782.3,216.4 1784.0,216.1 1785.7,216.2 1787.4,216.2 1789.1,216.5 1790.8,215.3 1792.5,216.1 1794.2,215.0 1795.9,215.9 1797.6,214.9 1799.3,214.5 1801.0,214.7 1802.7,214.1 1804.4,214.2 1806.1,216.0 1807.8,214.1 1809.5,215.5 1811.2,214.0 1812.9,214.4 1814.6,214.5 1816.3,215.5 1818.0,214.4 1819.7,214.4 1821.4,214.7 1823.1,216.1 1824.4,215.0 1826.0,186.4 1827.6,215.5 1828.2,215.4 1829.9,215.2 1831.6,214.0 1833.3,216.1 1835.0,215.3 1836.7,214.6 1838.4,215.7 1840.1,213.9 1841.8,214.9 1843.5,215.8 1845.2,214.3 1846.9,214.8 1848.6,216.2 1850.3,215.6 1852.0,214.6 1853.7,214.3 1855.4,213.9 1857.1,216.2 1858.8,214.1 1860.5,215.8 1860.5,222.6" fill="#1c6040" fill-opacity="1"/>
<polygon points="1342.0,222.6 1342.0,233.4 1343.6,233.4 1345.2,234.7 1346.8,233.7 1348.4,234.4 1350.0,233.0 1351.6,234.3 1353.2,233.3 1354.8,234.6 1356.4,232.4 1358.0,234.3 1359.6,232.7 1361.0,236.0 1362.3,245.5 1363.6,231.0 1365.0,232.2 1366.6,232.1 1368.2,230.5 1369.8,233.5 1371.4,231.2 1373.0,231.2 1374.6,230.1 1376.2,231.1 1377.8,231.9 1379.4,232.9 1381.0,231.4 1382.6,232.8 1384.2,230.3 1385.8,231.5 1387.4,231.8 1389.0,234.1 1390.6,233.5 1392.2,232.7 1393.8,229.9 1395.4,231.5 1397.0,232.9 1398.6,230.8 1400.2,232.3 1401.8,231.8 1403.4,229.8 1405.0,234.2 1406.6,233.3 1408.2,230.7 1409.8,232.5 1411.4,231.1 1413.0,231.5 1414.6,232.2 1416.2,231.1 1417.8,231.3 1419.4,231.5 1421.0,232.7 1422.6,230.9 1424.2,230.7 1425.8,233.0 1427.4,231.2 1429.0,234.0 1430.6,232.3 1432.2,233.0 1433.8,231.3 1435.4,233.4 1437.0,230.2 1438.6,230.4 1440.2,230.2 1441.0,230.9 1442.6,231.0 1444.2,229.1 1445.8,229.9 1447.4,231.5 1449.0,230.6 1450.6,228.8 1452.2,229.3 1453.8,229.1 1455.4,228.9 1457.0,230.0 1458.6,228.8 1460.2,231.8 1461.8,230.0 1463.4,230.3 1465.0,230.8 1466.6,231.3 1468.2,231.5 1469.8,229.9 1471.4,229.7 1473.0,230.0 1474.6,228.6 1476.2,229.9 1477.8,231.0 1479.4,232.0 1481.0,231.3 1482.6,230.9 1484.2,230.7 1485.8,228.6 1487.4,229.7 1489.0,229.7 1490.6,230.8 1492.2,228.9 1493.8,229.9 1495.4,230.3 1497.0,231.3 1498.6,231.5 1500.2,230.7 1501.8,229.1 1503.4,231.3 1505.0,231.8 1506.6,230.5 1508.2,229.8 1509.8,230.3 1511.4,229.0 1513.0,231.1 1514.6,232.1 1516.2,230.4 1517.8,231.1 1519.4,231.5 1521.0,229.2 1522.6,231.9 1526.0,227.8 1529.0,226.0 1531.0,227.9 1532.6,227.0 1534.2,226.8 1535.8,227.1 1537.4,227.8 1539.0,228.0 1540.6,227.3 1542.2,228.5 1543.8,227.3 1545.4,227.5 1547.0,226.8 1548.6,228.5 1550.2,226.9 1551.8,228.4 1553.4,227.7 1555.0,227.7 1556.6,227.7 1558.2,227.1 1559.8,228.4 1561.4,228.6 1563.0,228.2 1564.6,227.8 1566.2,226.8 1567.8,228.2 1569.4,227.2 1571.0,228.4 1572.6,227.1 1574.2,227.7 1575.8,228.3 1577.4,227.0 1579.0,227.7 1580.6,226.8 1582.2,226.7 1583.8,227.0 1585.4,228.6 1587.0,228.5 1588.6,227.9 1590.2,227.2 1591.8,227.9 1593.4,228.1 1595.0,227.4 1596.6,227.8 1598.2,228.2 1599.8,226.6 1600.0,228.7 1601.6,229.9 1603.2,228.4 1604.8,229.5 1606.4,230.3 1608.0,228.6 1609.6,230.1 1611.2,229.0 1612.8,230.3 1614.4,229.3 1616.0,230.6 1617.6,228.0 1619.2,230.8 1620.8,228.4 1622.4,232.0 1624.0,230.4 1625.6,229.9 1627.2,229.6 1628.8,230.5 1630.4,230.8 1632.0,231.1 1633.6,231.1 1635.2,229.9 1636.8,232.2 1638.4,231.5 1640.0,231.6 1640.0,231.8 1641.6,232.0 1643.2,232.6 1644.8,234.4 1646.4,232.4 1648.0,232.4 1649.6,231.9 1651.2,234.4 1652.8,231.4 1654.4,230.0 1656.0,233.5 1657.6,234.4 1659.2,233.5 1660.8,232.8 1662.4,233.6 1664.0,231.3 1665.6,232.8 1667.2,230.1 1668.0,228.5 1669.6,229.8 1671.2,230.0 1672.8,229.6 1674.4,228.2 1676.0,230.8 1677.6,230.1 1679.2,229.0 1680.8,229.2 1682.0,235.0 1684.0,228.0 1686.0,224.9 1688.0,225.0 1691.0,225.0 1694.0,224.9 1697.0,225.3 1700.0,225.3 1703.0,225.2 1706.0,225.3 1709.0,225.1 1712.0,225.3 1715.0,225.0 1718.0,225.2 1721.0,225.1 1724.0,225.3 1727.0,224.9 1730.0,225.2 1733.0,224.9 1736.0,225.1 1739.0,225.3 1742.0,224.9 1745.0,225.0 1748.0,225.0 1751.5,225.1 1753.5,227.7 1755.0,227.7 1758.0,227.6 1761.0,228.0 1764.0,228.0 1767.0,227.7 1770.0,227.7 1773.0,227.8 1776.0,227.6 1779.0,227.6 1782.0,228.0 1785.0,227.7 1788.0,227.8 1791.0,228.0 1794.0,228.0 1797.0,227.8 1800.0,227.7 1803.0,227.7 1806.0,228.0 1809.0,228.0 1812.0,227.6 1815.0,228.0 1818.0,227.7 1821.0,227.8 1824.0,227.6 1827.0,228.0 1830.0,228.0 1833.0,227.7 1836.0,227.9 1839.0,227.6 1842.0,228.0 1845.0,227.6 1848.0,227.6 1851.0,227.9 1854.0,227.7 1857.0,228.0 1859.0,228.0 1860.5,233.4 1860.5,222.6" fill="#1a4468" fill-opacity="1"/>
<line x1="1400.50" y1="134.1" x2="1400.50" y2="311.6" stroke="rgba(130,160,190,0.27)" stroke-width="1"/>
<line x1="1525.30" y1="134.1" x2="1525.30" y2="311.6" stroke="rgba(130,160,190,0.27)" stroke-width="1"/>
<line x1="1649.90" y1="134.1" x2="1649.90" y2="311.6" stroke="rgba(130,160,190,0.27)" stroke-width="1"/>
<line x1="1774.70" y1="134.1" x2="1774.70" y2="311.6" stroke="rgba(130,160,190,0.27)" stroke-width="1"/>
<line x1="1342" y1="154.00" x2="1861" y2="154.00" stroke="rgba(130,160,190,0.27)" stroke-width="1"/>
<line x1="1342" y1="176.88" x2="1861" y2="176.88" stroke="rgba(130,160,190,0.27)" stroke-width="1"/>
<line x1="1342" y1="199.76" x2="1861" y2="199.76" stroke="rgba(130,160,190,0.27)" stroke-width="1"/>
<line x1="1342" y1="222.64" x2="1861" y2="222.64" stroke="rgba(130,160,190,0.27)" stroke-width="1"/>
<line x1="1342" y1="245.52" x2="1861" y2="245.52" stroke="rgba(130,160,190,0.27)" stroke-width="1"/>
<line x1="1342" y1="268.40" x2="1861" y2="268.40" stroke="rgba(130,160,190,0.27)" stroke-width="1"/>
<line x1="1342" y1="291.28" x2="1861" y2="291.28" stroke="rgba(130,160,190,0.27)" stroke-width="1"/>
<polyline points="1342.0,215.1 1343.7,214.8 1345.4,214.4 1347.1,216.1 1348.8,216.3 1350.5,215.5 1352.2,214.3 1353.9,216.2 1355.6,215.8 1357.3,214.6 1359.0,215.1 1360.5,215.0 1362.1,201.0 1363.7,215.5 1364.1,214.8 1365.8,216.6 1367.5,211.6 1369.2,213.8 1370.9,215.8 1372.6,214.7 1374.3,214.0 1376.0,212.6 1377.7,216.1 1379.4,211.8 1381.1,215.6 1382.8,215.6 1384.5,216.1 1386.2,215.7 1387.9,215.2 1389.6,213.9 1391.3,215.8 1393.0,214.6 1394.7,215.8 1396.4,215.6 1398.1,215.0 1399.8,216.3 1401.5,216.4 1403.2,214.3 1404.9,215.6 1406.6,214.9 1408.3,216.3 1410.0,216.4 1411.7,215.7 1413.4,215.8 1415.1,215.6 1416.8,214.5 1418.5,216.5 1420.2,215.3 1421.9,214.8 1423.6,216.2 1425.3,214.1 1427.0,215.4 1428.7,212.7 1430.4,216.1 1432.1,216.1 1433.8,214.8 1435.5,214.3 1437.2,215.3 1438.9,216.2 1440.6,216.5 1442.3,216.5 1444.0,214.5 1445.7,214.7 1447.4,215.6 1449.1,216.2 1450.8,215.0 1452.4,196.0 1454.0,215.5 1454.2,214.5 1455.9,216.5 1457.6,215.4 1459.3,215.3 1461.0,213.0 1462.7,216.5 1464.4,215.0 1466.1,215.4 1467.8,215.8 1469.5,215.4 1471.2,216.5 1471.7,215.0 1473.3,200.0 1474.9,215.5 1476.3,216.1 1478.0,215.2 1479.7,214.4 1481.4,216.4 1483.1,213.5 1484.8,214.4 1486.5,215.8 1488.2,214.9 1489.9,214.2 1491.6,214.2 1493.3,214.6 1495.0,215.3 1496.7,214.9 1498.4,215.3 1500.1,214.5 1501.8,215.6 1502.2,215.0 1503.8,193.5 1504.2,215.0 1505.8,194.5 1507.4,215.5 1508.6,216.3 1510.3,214.8 1512.0,214.5 1513.7,216.3 1515.4,214.5 1517.1,214.6 1518.8,216.1 1520.5,216.0 1522.2,215.0 1523.9,213.9 1525.6,215.7 1527.3,216.5 1529.0,215.3 1530.7,215.3 1532.4,214.4 1534.1,211.7 1535.8,215.4 1537.5,215.4 1539.2,214.4 1540.9,216.2 1542.6,216.4 1544.3,214.1 1546.0,215.1 1547.7,214.8 1549.4,215.3 1551.1,213.0 1552.8,215.8 1554.5,214.4 1556.2,215.9 1557.9,214.4 1559.6,212.8 1561.3,216.3 1563.0,215.8 1564.7,215.6 1566.4,215.5 1568.1,216.6 1569.8,214.6 1571.5,215.9 1573.2,216.1 1574.9,216.3 1576.6,215.8 1578.3,216.0 1580.0,215.9 1581.7,214.8 1583.4,213.9 1585.1,215.6 1586.8,214.5 1588.5,215.7 1590.2,215.7 1591.9,215.3 1593.6,216.6 1595.3,215.8 1597.0,214.0 1598.7,215.6 1600.4,214.6 1602.1,214.0 1603.8,214.9 1605.5,214.6 1607.2,215.4 1608.9,216.5 1610.6,216.6 1612.3,216.1 1614.0,215.5 1615.7,214.0 1617.4,214.3 1619.1,214.4 1620.8,213.1 1622.0,215.0 1623.6,180.4 1625.2,215.5 1625.9,214.9 1627.6,215.7 1629.3,214.7 1631.0,212.2 1632.7,212.1 1634.4,214.3 1636.1,215.0 1637.8,213.4 1639.5,216.6 1641.2,214.1 1642.9,215.1 1644.6,216.5 1646.3,215.3 1648.0,215.9 1649.7,216.5 1651.4,215.5 1653.1,215.6 1654.8,211.9 1656.5,215.3 1656.6,215.0 1658.2,139.0 1659.8,215.5 1659.9,215.1 1661.6,215.5 1663.3,216.0 1665.0,216.6 1666.7,215.9 1668.4,214.2 1670.1,216.0 1671.8,214.9 1673.5,215.7 1675.2,215.5 1676.9,215.9 1678.6,214.6 1680.3,216.4 1682.0,214.0 1683.7,214.6 1685.4,215.6 1687.1,215.4 1688.8,214.1 1690.5,215.4 1692.2,214.9 1693.9,214.5 1695.6,215.9 1697.3,214.1 1699.0,216.1 1700.7,216.0 1702.4,215.0 1704.1,216.1 1705.8,215.7 1707.5,214.8 1709.2,215.9 1710.9,215.1 1712.6,214.2 1714.3,214.1 1716.0,215.4 1717.7,215.8 1719.4,216.0 1721.1,214.5 1722.8,214.1 1724.5,215.9 1726.2,214.7 1727.9,214.9 1729.6,214.9 1731.3,215.8 1733.0,216.4 1734.7,216.4 1736.4,216.1 1738.1,214.8 1739.8,216.4 1741.5,214.6 1743.2,214.9 1744.9,215.0 1746.6,214.4 1748.3,216.1 1750.0,216.2 1751.7,214.4 1753.4,216.3 1755.1,214.0 1756.8,215.4 1758.5,216.5 1760.2,216.1 1761.9,215.4 1763.6,214.1 1765.3,215.9 1767.0,214.1 1768.7,214.3 1770.4,215.7 1772.1,214.5 1773.8,215.3 1775.5,215.0 1777.2,216.5 1778.9,215.2 1780.6,215.8 1782.3,216.4 1784.0,216.1 1785.7,216.2 1787.4,216.2 1789.1,216.5 1790.8,215.3 1792.5,216.1 1794.2,215.0 1795.9,215.9 1797.6,214.9 1799.3,214.5 1801.0,214.7 1802.7,214.1 1804.4,214.2 1806.1,216.0 1807.8,214.1 1809.5,215.5 1811.2,214.0 1812.9,214.4 1814.6,214.5 1816.3,215.5 1818.0,214.4 1819.7,214.4 1821.4,214.7 1823.1,216.1 1824.4,215.0 1826.0,186.4 1827.6,215.5 1828.2,215.4 1829.9,215.2 1831.6,214.0 1833.3,216.1 1835.0,215.3 1836.7,214.6 1838.4,215.7 1840.1,213.9 1841.8,214.9 1843.5,215.8 1845.2,214.3 1846.9,214.8 1848.6,216.2 1850.3,215.6 1852.0,214.6 1853.7,214.3 1855.4,213.9 1857.1,216.2 1858.8,214.1 1860.5,215.8" fill="none" stroke="#0cdc5e" stroke-width="1.15" stroke-linejoin="round" />
<polyline points="1342.0,233.4 1343.6,233.4 1345.2,234.7 1346.8,233.7 1348.4,234.4 1350.0,233.0 1351.6,234.3 1353.2,233.3 1354.8,234.6 1356.4,232.4 1358.0,234.3 1359.6,232.7 1361.0,236.0 1362.3,245.5 1363.6,231.0 1365.0,232.2 1366.6,232.1 1368.2,230.5 1369.8,233.5 1371.4,231.2 1373.0,231.2 1374.6,230.1 1376.2,231.1 1377.8,231.9 1379.4,232.9 1381.0,231.4 1382.6,232.8 1384.2,230.3 1385.8,231.5 1387.4,231.8 1389.0,234.1 1390.6,233.5 1392.2,232.7 1393.8,229.9 1395.4,231.5 1397.0,232.9 1398.6,230.8 1400.2,232.3 1401.8,231.8 1403.4,229.8 1405.0,234.2 1406.6,233.3 1408.2,230.7 1409.8,232.5 1411.4,231.1 1413.0,231.5 1414.6,232.2 1416.2,231.1 1417.8,231.3 1419.4,231.5 1421.0,232.7 1422.6,230.9 1424.2,230.7 1425.8,233.0 1427.4,231.2 1429.0,234.0 1430.6,232.3 1432.2,233.0 1433.8,231.3 1435.4,233.4 1437.0,230.2 1438.6,230.4 1440.2,230.2 1441.0,230.9 1442.6,231.0 1444.2,229.1 1445.8,229.9 1447.4,231.5 1449.0,230.6 1450.6,228.8 1452.2,229.3 1453.8,229.1 1455.4,228.9 1457.0,230.0 1458.6,228.8 1460.2,231.8 1461.8,230.0 1463.4,230.3 1465.0,230.8 1466.6,231.3 1468.2,231.5 1469.8,229.9 1471.4,229.7 1473.0,230.0 1474.6,228.6 1476.2,229.9 1477.8,231.0 1479.4,232.0 1481.0,231.3 1482.6,230.9 1484.2,230.7 1485.8,228.6 1487.4,229.7 1489.0,229.7 1490.6,230.8 1492.2,228.9 1493.8,229.9 1495.4,230.3 1497.0,231.3 1498.6,231.5 1500.2,230.7 1501.8,229.1 1503.4,231.3 1505.0,231.8 1506.6,230.5 1508.2,229.8 1509.8,230.3 1511.4,229.0 1513.0,231.1 1514.6,232.1 1516.2,230.4 1517.8,231.1 1519.4,231.5 1521.0,229.2 1522.6,231.9 1526.0,227.8 1529.0,226.0 1531.0,227.9 1532.6,227.0 1534.2,226.8 1535.8,227.1 1537.4,227.8 1539.0,228.0 1540.6,227.3 1542.2,228.5 1543.8,227.3 1545.4,227.5 1547.0,226.8 1548.6,228.5 1550.2,226.9 1551.8,228.4 1553.4,227.7 1555.0,227.7 1556.6,227.7 1558.2,227.1 1559.8,228.4 1561.4,228.6 1563.0,228.2 1564.6,227.8 1566.2,226.8 1567.8,228.2 1569.4,227.2 1571.0,228.4 1572.6,227.1 1574.2,227.7 1575.8,228.3 1577.4,227.0 1579.0,227.7 1580.6,226.8 1582.2,226.7 1583.8,227.0 1585.4,228.6 1587.0,228.5 1588.6,227.9 1590.2,227.2 1591.8,227.9 1593.4,228.1 1595.0,227.4 1596.6,227.8 1598.2,228.2 1599.8,226.6 1600.0,228.7 1601.6,229.9 1603.2,228.4 1604.8,229.5 1606.4,230.3 1608.0,228.6 1609.6,230.1 1611.2,229.0 1612.8,230.3 1614.4,229.3 1616.0,230.6 1617.6,228.0 1619.2,230.8 1620.8,228.4 1622.4,232.0 1624.0,230.4 1625.6,229.9 1627.2,229.6 1628.8,230.5 1630.4,230.8 1632.0,231.1 1633.6,231.1 1635.2,229.9 1636.8,232.2 1638.4,231.5 1640.0,231.6 1640.0,231.8 1641.6,232.0 1643.2,232.6 1644.8,234.4 1646.4,232.4 1648.0,232.4 1649.6,231.9 1651.2,234.4 1652.8,231.4 1654.4,230.0 1656.0,233.5 1657.6,234.4 1659.2,233.5 1660.8,232.8 1662.4,233.6 1664.0,231.3 1665.6,232.8 1667.2,230.1 1668.0,228.5 1669.6,229.8 1671.2,230.0 1672.8,229.6 1674.4,228.2 1676.0,230.8 1677.6,230.1 1679.2,229.0 1680.8,229.2 1682.0,235.0 1684.0,228.0 1686.0,224.9 1688.0,225.0 1691.0,225.0 1694.0,224.9 1697.0,225.3 1700.0,225.3 1703.0,225.2 1706.0,225.3 1709.0,225.1 1712.0,225.3 1715.0,225.0 1718.0,225.2 1721.0,225.1 1724.0,225.3 1727.0,224.9 1730.0,225.2 1733.0,224.9 1736.0,225.1 1739.0,225.3 1742.0,224.9 1745.0,225.0 1748.0,225.0 1751.5,225.1 1753.5,227.7 1755.0,227.7 1758.0,227.6 1761.0,228.0 1764.0,228.0 1767.0,227.7 1770.0,227.7 1773.0,227.8 1776.0,227.6 1779.0,227.6 1782.0,228.0 1785.0,227.7 1788.0,227.8 1791.0,228.0 1794.0,228.0 1797.0,227.8 1800.0,227.7 1803.0,227.7 1806.0,228.0 1809.0,228.0 1812.0,227.6 1815.0,228.0 1818.0,227.7 1821.0,227.8 1824.0,227.6 1827.0,228.0 1830.0,228.0 1833.0,227.7 1836.0,227.9 1839.0,227.6 1842.0,228.0 1845.0,227.6 1848.0,227.6 1851.0,227.9 1854.0,227.7 1857.0,228.0 1859.0,228.0 1860.5,233.4" fill="none" stroke="#0a8cf0" stroke-width="1.15" stroke-linejoin="round" />
<text x="200.70" y="554.60" font-family='"DejaVu Sans", sans-serif' font-size="10.667" text-anchor="middle" fill="#e6e6e6" font-weight="normal" >Mon 18:00</text>
<text x="325.50" y="554.60" font-family='"DejaVu Sans", sans-serif' font-size="10.667" text-anchor="middle" fill="#e6e6e6" font-weight="normal" >Tue 00:00</text>
<text x="450.10" y="554.60" font-family='"DejaVu Sans", sans-serif' font-size="10.667" text-anchor="middle" fill="#e6e6e6" font-weight="normal" >Tue 06:00</text>
<text x="574.90" y="554.60" font-family='"DejaVu Sans", sans-serif' font-size="10.667" text-anchor="middle" fill="#e6e6e6" font-weight="normal" >Tue 12:00</text>
<text x="136.80" y="377.35" font-family='"DejaVu Sans", sans-serif' font-size="10.667" text-anchor="end" fill="#e6e6e6" font-weight="normal" >4 GB</text>
<text x="136.80" y="398.19" font-family='"DejaVu Sans", sans-serif' font-size="10.667" text-anchor="end" fill="#e6e6e6" font-weight="normal" >3.50 GB</text>
<text x="136.80" y="419.03" font-family='"DejaVu Sans", sans-serif' font-size="10.667" text-anchor="end" fill="#e6e6e6" font-weight="normal" >3 GB</text>
<text x="136.80" y="439.87" font-family='"DejaVu Sans", sans-serif' font-size="10.667" text-anchor="end" fill="#e6e6e6" font-weight="normal" >2.50 GB</text>
<text x="136.80" y="460.71" font-family='"DejaVu Sans", sans-serif' font-size="10.667" text-anchor="end" fill="#e6e6e6" font-weight="normal" >2 GB</text>
<text x="136.80" y="481.55" font-family='"DejaVu Sans", sans-serif' font-size="10.667" text-anchor="end" fill="#e6e6e6" font-weight="normal" >1.50 GB</text>
<text x="136.80" y="502.39" font-family='"DejaVu Sans", sans-serif' font-size="10.667" text-anchor="end" fill="#e6e6e6" font-weight="normal" >1 GB</text>
<text x="136.80" y="523.23" font-family='"DejaVu Sans", sans-serif' font-size="10.667" text-anchor="end" fill="#e6e6e6" font-weight="normal" >512 MB</text>
<text x="136.80" y="543.57" font-family='"DejaVu Sans", sans-serif' font-size="10.667" text-anchor="end" fill="#e6e6e6" font-weight="normal" >0</text>
<polygon points="142.1,541.6 142.1,440.4 153.4,436.2 154.5,436.6 155.9,451.4 182.2,447.2 192.7,441.3 200.5,440.2 211.7,437.3 218.0,434.1 235.6,431.0 245.5,427.8 247.9,438.0 259.5,435.7 273.6,431.4 285.5,429.2 289.3,433.4 308.7,428.2 324.2,424.0 327.7,419.8 331.0,424.0 350.9,418.4 369.9,414.1 372.3,418.4 405.6,409.5 411.3,408.5 413.8,413.0 451.3,402.5 455.3,407.4 459.1,399.8 494.2,390.2 497.0,395.2 535.7,385.3 538.5,389.8 577.9,380.1 580.4,384.9 618.0,374.1 621.5,379.4 661.0,368.7 661.0,541.6" fill="#425866" fill-opacity="1"/>
<polygon points="142.0,541.6 142.0,530.9 324.0,529.0 449.7,527.7 456.4,527.9 459.8,523.3 661.0,521.4 661.0,541.6" fill="#305064" fill-opacity="1"/>
<polygon points="142.0,541.6 142.0,533.8 324.0,532.8 449.7,531.9 456.4,531.8 459.8,529.9 661.0,528.4 661.0,541.6" fill="#484464" fill-opacity="1"/>
<line x1="200.50" y1="364.1" x2="200.50" y2="541.6" stroke="rgba(130,160,190,0.27)" stroke-width="1"/>
<line x1="325.30" y1="364.1" x2="325.30" y2="541.6" stroke="rgba(130,160,190,0.27)" stroke-width="1"/>
<line x1="449.90" y1="364.1" x2="449.90" y2="541.6" stroke="rgba(130,160,190,0.27)" stroke-width="1"/>
<line x1="574.70" y1="364.1" x2="574.70" y2="541.6" stroke="rgba(130,160,190,0.27)" stroke-width="1"/>
<line x1="142" y1="374.55" x2="661" y2="374.55" stroke="rgba(130,160,190,0.27)" stroke-width="1"/>
<line x1="142" y1="395.39" x2="661" y2="395.39" stroke="rgba(130,160,190,0.27)" stroke-width="1"/>
<line x1="142" y1="416.23" x2="661" y2="416.23" stroke="rgba(130,160,190,0.27)" stroke-width="1"/>
<line x1="142" y1="437.07" x2="661" y2="437.07" stroke="rgba(130,160,190,0.27)" stroke-width="1"/>
<line x1="142" y1="457.91" x2="661" y2="457.91" stroke="rgba(130,160,190,0.27)" stroke-width="1"/>
<line x1="142" y1="478.75" x2="661" y2="478.75" stroke="rgba(130,160,190,0.27)" stroke-width="1"/>
<line x1="142" y1="499.59" x2="661" y2="499.59" stroke="rgba(130,160,190,0.27)" stroke-width="1"/>
<line x1="142" y1="520.43" x2="661" y2="520.43" stroke="rgba(130,160,190,0.27)" stroke-width="1"/>
<line x1="142" y1="541.27" x2="661" y2="541.27" stroke="rgba(130,160,190,0.27)" stroke-width="1"/>
<polyline points="142.1,440.4 153.4,436.2 154.5,436.6 155.9,451.4 182.2,447.2 192.7,441.3 200.5,440.2 211.7,437.3 218.0,434.1 235.6,431.0 245.5,427.8 247.9,438.0 259.5,435.7 273.6,431.4 285.5,429.2 289.3,433.4 308.7,428.2 324.2,424.0 327.7,419.8 331.0,424.0 350.9,418.4 369.9,414.1 372.3,418.4 405.6,409.5 411.3,408.5 413.8,413.0 451.3,402.5 455.3,407.4 459.1,399.8 494.2,390.2 497.0,395.2 535.7,385.3 538.5,389.8 577.9,380.1 580.4,384.9 618.0,374.1 621.5,379.4 661.0,368.7" fill="none" stroke="#8fc1e0" stroke-width="1.2" stroke-linejoin="round" />
<polyline points="142.0,530.9 324.0,529.0 449.7,527.7 456.4,527.9 459.8,523.3 661.0,521.4" fill="none" stroke="#3f9fd6" stroke-width="1.2" stroke-linejoin="round" />
<polyline points="142.0,533.8 324.0,532.8 449.7,531.9 456.4,531.8 459.8,529.9 661.0,528.4" fill="none" stroke="#55d3dc" stroke-width="1.2" stroke-linejoin="round" />
<text x="800.70" y="554.60" font-family='"DejaVu Sans", sans-serif' font-size="10.667" text-anchor="middle" fill="#e6e6e6" font-weight="normal" >Mon 18:00</text>
<text x="925.50" y="554.60" font-family='"DejaVu Sans", sans-serif' font-size="10.667" text-anchor="middle" fill="#e6e6e6" font-weight="normal" >Tue 00:00</text>
<text x="1050.10" y="554.60" font-family='"DejaVu Sans", sans-serif' font-size="10.667" text-anchor="middle" fill="#e6e6e6" font-weight="normal" >Tue 06:00</text>
<text x="1174.90" y="554.60" font-family='"DejaVu Sans", sans-serif' font-size="10.667" text-anchor="middle" fill="#e6e6e6" font-weight="normal" >Tue 12:00</text>
<text x="736.80" y="387.35" font-family='"DejaVu Sans", sans-serif' font-size="10.667" text-anchor="end" fill="#e6e6e6" font-weight="normal" >2 MB/s</text>
<text x="736.80" y="421.30" font-family='"DejaVu Sans", sans-serif' font-size="10.667" text-anchor="end" fill="#e6e6e6" font-weight="normal" >1 MB/s</text>
<text x="736.80" y="455.25" font-family='"DejaVu Sans", sans-serif' font-size="10.667" text-anchor="end" fill="#e6e6e6" font-weight="normal" >0</text>
<text x="736.80" y="489.20" font-family='"DejaVu Sans", sans-serif' font-size="10.667" text-anchor="end" fill="#e6e6e6" font-weight="normal" >1 MB/s</text>
<text x="736.80" y="523.15" font-family='"DejaVu Sans", sans-serif' font-size="10.667" text-anchor="end" fill="#e6e6e6" font-weight="normal" >2 MB/s</text>
<polygon points="742.4,452.2 742.4,460.9 743.7,462.4 745.3,504.7 746.9,462.3 747.5,458.5 749.4,461.3 751.3,461.5 753.2,459.1 754.2,460.5 755.8,495.2 757.4,460.8 758.0,458.9 759.9,460.8 761.8,460.4 764.4,461.6 765.9,488.9 767.5,460.9 768.2,459.1 770.1,463.5 772.0,463.5 773.9,461.5 774.8,461.5 776.4,498.4 778.0,461.8 778.7,458.2 780.6,462.2 782.5,464.0 784.4,459.0 786.9,460.6 788.5,508.6 790.1,461.1 790.7,463.1 792.6,461.2 794.5,458.2 797.1,462.1 798.7,493.6 800.3,461.4 800.9,461.3 802.8,458.7 804.7,460.3 806.6,460.3 807.6,461.4 809.2,492.0 810.7,461.7 811.4,461.0 813.3,459.9 815.2,458.6 817.7,460.4 819.3,495.2 820.9,462.0 821.5,458.9 823.5,460.7 825.4,460.8 827.3,460.8 829.8,460.6 831.4,511.1 833.0,461.7 833.6,458.8 835.5,460.1 837.4,459.8 839.3,458.2 840.6,461.7 842.2,495.2 843.8,462.3 844.4,460.0 846.3,461.1 848.2,458.7 850.1,458.6 851.1,460.0 852.7,504.1 854.3,461.7 854.9,459.6 856.8,459.6 858.7,459.0 861.3,462.2 862.9,484.7 864.4,460.5 865.1,461.2 867.0,460.0 868.9,459.9 870.8,460.8 871.7,460.6 873.3,503.2 874.9,460.7 875.6,459.1 877.5,458.2 879.4,459.1 881.3,460.2 882.9,461.4 884.5,500.0 886.0,461.0 886.7,460.1 888.6,458.3 890.5,460.9 892.4,458.6 894.0,460.7 895.6,485.7 897.2,460.7 897.8,460.5 899.7,460.9 901.6,460.8 904.2,460.1 905.7,507.3 907.3,461.4 908.0,459.3 909.9,458.8 911.8,461.4 913.7,458.2 915.3,461.3 916.9,502.2 918.5,462.4 919.1,461.5 921.0,458.5 922.9,459.6 925.1,462.1 926.7,535.9 928.3,460.4 928.9,458.9 930.8,461.1 932.7,458.5 934.7,459.4 936.2,460.8 937.8,496.8 939.4,461.5 940.1,458.3 942.0,458.2 943.9,461.5 946.4,462.1 948.0,535.9 949.6,462.4 950.2,458.8 952.1,458.9 954.0,460.0 955.9,458.9 957.5,461.3 959.1,484.1 960.7,462.9 961.3,459.3 963.2,459.2 965.2,461.5 967.1,460.2 968.6,460.1 970.2,487.3 971.8,461.4 972.5,460.3 974.4,458.2 976.3,459.2 978.2,460.5 979.1,462.4 980.7,506.3 982.3,462.0 982.9,461.1 984.9,459.7 986.8,459.4 989.3,462.4 990.9,498.4 992.5,461.4 993.1,460.8 995.0,458.8 996.9,459.3 998.8,458.7 999.8,461.5 1001.4,487.3 1003.0,460.7 1003.6,458.7 1005.5,458.8 1007.4,459.7 1009.3,459.1 1011.5,461.2 1013.1,494.6 1014.7,463.1 1015.4,460.4 1017.3,461.1 1019.2,458.8 1021.1,459.4 1022.0,460.2 1023.6,532.4 1025.2,462.2 1025.8,459.3 1027.7,459.0 1029.7,458.1 1031.6,458.7 1032.8,460.7 1034.4,484.1 1036.0,461.4 1036.6,461.3 1038.5,460.5 1040.5,459.0 1042.4,459.3 1043.3,460.4 1044.9,480.9 1046.5,462.9 1047.1,459.3 1049.0,460.7 1050.9,460.6 1053.5,462.5 1055.1,491.4 1056.7,460.3 1056.7,460.9 1058.2,482.5 1059.8,461.4 1060.5,458.3 1062.4,461.1 1064.3,459.2 1065.6,462.1 1067.1,527.0 1068.7,461.7 1069.4,458.2 1071.3,459.4 1073.2,458.9 1075.1,458.2 1076.0,460.4 1077.6,493.6 1079.2,462.0 1079.8,458.1 1081.8,459.1 1083.7,459.5 1086.2,461.5 1087.8,485.7 1089.4,460.7 1090.0,460.5 1091.9,458.9 1093.8,460.6 1095.7,460.4 1096.7,460.4 1098.3,478.7 1099.9,460.8 1100.5,459.0 1102.4,460.5 1104.3,459.5 1106.9,461.0 1108.4,490.4 1110.0,462.7 1110.7,458.8 1112.6,459.1 1114.5,459.2 1116.4,458.8 1117.3,460.1 1118.9,532.4 1120.5,460.3 1121.2,460.2 1123.1,460.0 1125.0,460.9 1126.9,461.4 1128.1,460.8 1129.7,485.7 1131.3,462.2 1132.0,461.3 1133.9,458.8 1135.8,460.4 1137.7,460.4 1138.6,462.7 1140.2,501.6 1141.8,462.7 1142.4,458.9 1144.3,460.2 1146.3,458.4 1148.2,459.5 1150.4,461.1 1152.0,487.9 1153.6,460.4 1154.2,459.4 1156.1,459.2 1158.0,459.8 1159.9,459.0 1160.9,460.4 1162.5,498.4 1164.0,461.4 1164.7,459.7 1166.6,458.6 1168.5,460.4 1170.4,458.9 1171.4,460.2 1172.9,494.6 1174.5,461.2 1175.2,459.5 1177.1,458.6 1179.0,460.1 1181.5,461.9 1183.1,485.7 1184.7,461.8 1185.3,460.5 1187.2,458.1 1188.5,461.1 1190.1,494.6 1191.7,461.3 1192.0,460.1 1193.6,499.0 1195.2,461.4 1195.8,458.2 1197.7,459.8 1199.6,460.1 1202.2,461.3 1203.8,498.4 1205.3,461.2 1206.0,458.9 1207.9,458.1 1209.8,459.3 1211.7,461.2 1214.2,461.6 1215.8,496.5 1217.4,461.0 1218.1,460.4 1220.0,458.7 1221.9,459.7 1224.4,461.7 1226.0,536.5 1227.6,463.0 1228.2,459.3 1230.1,460.1 1232.0,461.3 1233.9,460.7 1234.9,461.7 1236.5,488.9 1238.1,462.0 1238.7,459.5 1240.6,459.5 1242.5,459.0 1244.4,460.9 1245.4,462.5 1247.0,501.6 1248.6,461.4 1249.2,461.2 1251.1,458.2 1253.0,458.5 1254.9,459.8 1256.2,460.8 1257.8,482.5 1259.4,461.3 1260.3,459.6 1260.3,452.2" fill="#28415e" fill-opacity="1"/>
<polygon points="742.4,452.2 742.4,451.7 753.2,451.4 755.8,450.4 757.7,451.7 782.8,452.0 786.0,450.4 793.9,450.1 795.8,451.7 811.4,451.4 814.6,448.2 816.8,451.4 841.6,451.0 860.6,452.0 892.4,451.7 923.5,451.4 925.4,438.0 927.0,431.7 928.6,447.6 929.9,451.7 971.8,451.7 1019.5,451.7 1054.4,451.4 1056.7,441.2 1058.2,424.4 1060.2,441.2 1062.1,451.4 1114.8,451.7 1178.3,451.7 1226.6,451.7 1230.8,450.1 1233.9,451.7 1260.9,451.7 1260.9,452.2" fill="#1f6a45" fill-opacity="1"/>
<line x1="800.50" y1="364.1" x2="800.50" y2="541.6" stroke="rgba(130,160,190,0.27)" stroke-width="1"/>
<line x1="925.30" y1="364.1" x2="925.30" y2="541.6" stroke="rgba(130,160,190,0.27)" stroke-width="1"/>
<line x1="1049.90" y1="364.1" x2="1049.90" y2="541.6" stroke="rgba(130,160,190,0.27)" stroke-width="1"/>
<line x1="1174.70" y1="364.1" x2="1174.70" y2="541.6" stroke="rgba(130,160,190,0.27)" stroke-width="1"/>
<line x1="742" y1="384.55" x2="1261" y2="384.55" stroke="rgba(130,160,190,0.27)" stroke-width="1"/>
<line x1="742" y1="418.50" x2="1261" y2="418.50" stroke="rgba(130,160,190,0.27)" stroke-width="1"/>
<line x1="742" y1="452.45" x2="1261" y2="452.45" stroke="rgba(130,160,190,0.27)" stroke-width="1"/>
<line x1="742" y1="486.40" x2="1261" y2="486.40" stroke="rgba(130,160,190,0.27)" stroke-width="1"/>
<line x1="742" y1="520.35" x2="1261" y2="520.35" stroke="rgba(130,160,190,0.27)" stroke-width="1"/>
<polyline points="742.4,460.9 743.7,462.4 745.3,504.7 746.9,462.3 747.5,458.5 749.4,461.3 751.3,461.5 753.2,459.1 754.2,460.5 755.8,495.2 757.4,460.8 758.0,458.9 759.9,460.8 761.8,460.4 764.4,461.6 765.9,488.9 767.5,460.9 768.2,459.1 770.1,463.5 772.0,463.5 773.9,461.5 774.8,461.5 776.4,498.4 778.0,461.8 778.7,458.2 780.6,462.2 782.5,464.0 784.4,459.0 786.9,460.6 788.5,508.6 790.1,461.1 790.7,463.1 792.6,461.2 794.5,458.2 797.1,462.1 798.7,493.6 800.3,461.4 800.9,461.3 802.8,458.7 804.7,460.3 806.6,460.3 807.6,461.4 809.2,492.0 810.7,461.7 811.4,461.0 813.3,459.9 815.2,458.6 817.7,460.4 819.3,495.2 820.9,462.0 821.5,458.9 823.5,460.7 825.4,460.8 827.3,460.8 829.8,460.6 831.4,511.1 833.0,461.7 833.6,458.8 835.5,460.1 837.4,459.8 839.3,458.2 840.6,461.7 842.2,495.2 843.8,462.3 844.4,460.0 846.3,461.1 848.2,458.7 850.1,458.6 851.1,460.0 852.7,504.1 854.3,461.7 854.9,459.6 856.8,459.6 858.7,459.0 861.3,462.2 862.9,484.7 864.4,460.5 865.1,461.2 867.0,460.0 868.9,459.9 870.8,460.8 871.7,460.6 873.3,503.2 874.9,460.7 875.6,459.1 877.5,458.2 879.4,459.1 881.3,460.2 882.9,461.4 884.5,500.0 886.0,461.0 886.7,460.1 888.6,458.3 890.5,460.9 892.4,458.6 894.0,460.7 895.6,485.7 897.2,460.7 897.8,460.5 899.7,460.9 901.6,460.8 904.2,460.1 905.7,507.3 907.3,461.4 908.0,459.3 909.9,458.8 911.8,461.4 913.7,458.2 915.3,461.3 916.9,502.2 918.5,462.4 919.1,461.5 921.0,458.5 922.9,459.6 925.1,462.1 926.7,535.9 928.3,460.4 928.9,458.9 930.8,461.1 932.7,458.5 934.7,459.4 936.2,460.8 937.8,496.8 939.4,461.5 940.1,458.3 942.0,458.2 943.9,461.5 946.4,462.1 948.0,535.9 949.6,462.4 950.2,458.8 952.1,458.9 954.0,460.0 955.9,458.9 957.5,461.3 959.1,484.1 960.7,462.9 961.3,459.3 963.2,459.2 965.2,461.5 967.1,460.2 968.6,460.1 970.2,487.3 971.8,461.4 972.5,460.3 974.4,458.2 976.3,459.2 978.2,460.5 979.1,462.4 980.7,506.3 982.3,462.0 982.9,461.1 984.9,459.7 986.8,459.4 989.3,462.4 990.9,498.4 992.5,461.4 993.1,460.8 995.0,458.8 996.9,459.3 998.8,458.7 999.8,461.5 1001.4,487.3 1003.0,460.7 1003.6,458.7 1005.5,458.8 1007.4,459.7 1009.3,459.1 1011.5,461.2 1013.1,494.6 1014.7,463.1 1015.4,460.4 1017.3,461.1 1019.2,458.8 1021.1,459.4 1022.0,460.2 1023.6,532.4 1025.2,462.2 1025.8,459.3 1027.7,459.0 1029.7,458.1 1031.6,458.7 1032.8,460.7 1034.4,484.1 1036.0,461.4 1036.6,461.3 1038.5,460.5 1040.5,459.0 1042.4,459.3 1043.3,460.4 1044.9,480.9 1046.5,462.9 1047.1,459.3 1049.0,460.7 1050.9,460.6 1053.5,462.5 1055.1,491.4 1056.7,460.3 1056.7,460.9 1058.2,482.5 1059.8,461.4 1060.5,458.3 1062.4,461.1 1064.3,459.2 1065.6,462.1 1067.1,527.0 1068.7,461.7 1069.4,458.2 1071.3,459.4 1073.2,458.9 1075.1,458.2 1076.0,460.4 1077.6,493.6 1079.2,462.0 1079.8,458.1 1081.8,459.1 1083.7,459.5 1086.2,461.5 1087.8,485.7 1089.4,460.7 1090.0,460.5 1091.9,458.9 1093.8,460.6 1095.7,460.4 1096.7,460.4 1098.3,478.7 1099.9,460.8 1100.5,459.0 1102.4,460.5 1104.3,459.5 1106.9,461.0 1108.4,490.4 1110.0,462.7 1110.7,458.8 1112.6,459.1 1114.5,459.2 1116.4,458.8 1117.3,460.1 1118.9,532.4 1120.5,460.3 1121.2,460.2 1123.1,460.0 1125.0,460.9 1126.9,461.4 1128.1,460.8 1129.7,485.7 1131.3,462.2 1132.0,461.3 1133.9,458.8 1135.8,460.4 1137.7,460.4 1138.6,462.7 1140.2,501.6 1141.8,462.7 1142.4,458.9 1144.3,460.2 1146.3,458.4 1148.2,459.5 1150.4,461.1 1152.0,487.9 1153.6,460.4 1154.2,459.4 1156.1,459.2 1158.0,459.8 1159.9,459.0 1160.9,460.4 1162.5,498.4 1164.0,461.4 1164.7,459.7 1166.6,458.6 1168.5,460.4 1170.4,458.9 1171.4,460.2 1172.9,494.6 1174.5,461.2 1175.2,459.5 1177.1,458.6 1179.0,460.1 1181.5,461.9 1183.1,485.7 1184.7,461.8 1185.3,460.5 1187.2,458.1 1188.5,461.1 1190.1,494.6 1191.7,461.3 1192.0,460.1 1193.6,499.0 1195.2,461.4 1195.8,458.2 1197.7,459.8 1199.6,460.1 1202.2,461.3 1203.8,498.4 1205.3,461.2 1206.0,458.9 1207.9,458.1 1209.8,459.3 1211.7,461.2 1214.2,461.6 1215.8,496.5 1217.4,461.0 1218.1,460.4 1220.0,458.7 1221.9,459.7 1224.4,461.7 1226.0,536.5 1227.6,463.0 1228.2,459.3 1230.1,460.1 1232.0,461.3 1233.9,460.7 1234.9,461.7 1236.5,488.9 1238.1,462.0 1238.7,459.5 1240.6,459.5 1242.5,459.0 1244.4,460.9 1245.4,462.5 1247.0,501.6 1248.6,461.4 1249.2,461.2 1251.1,458.2 1253.0,458.5 1254.9,459.8 1256.2,460.8 1257.8,482.5 1259.4,461.3 1260.3,459.6" fill="none" stroke="#428cd4" stroke-width="1.0" stroke-linejoin="round" />
<polyline points="742.4,451.7 753.2,451.4 755.8,450.4 757.7,451.7 782.8,452.0 786.0,450.4 793.9,450.1 795.8,451.7 811.4,451.4 814.6,448.2 816.8,451.4 841.6,451.0 860.6,452.0 892.4,451.7 923.5,451.4 925.4,438.0 927.0,431.7 928.6,447.6 929.9,451.7 971.8,451.7 1019.5,451.7 1054.4,451.4 1056.7,441.2 1058.2,424.4 1060.2,441.2 1062.1,451.4 1114.8,451.7 1178.3,451.7 1226.6,451.7 1230.8,450.1 1233.9,451.7 1260.9,451.7" fill="none" stroke="#36cc7a" stroke-width="1.15" stroke-linejoin="round" />
<text x="1400.70" y="554.60" font-family='"DejaVu Sans", sans-serif' font-size="10.667" text-anchor="middle" fill="#e6e6e6" font-weight="normal" >Mon 18:00</text>
<text x="1525.50" y="554.60" font-family='"DejaVu Sans", sans-serif' font-size="10.667" text-anchor="middle" fill="#e6e6e6" font-weight="normal" >Tue 00:00</text>
<text x="1650.10" y="554.60" font-family='"DejaVu Sans", sans-serif' font-size="10.667" text-anchor="middle" fill="#e6e6e6" font-weight="normal" >Tue 06:00</text>
<text x="1774.90" y="554.60" font-family='"DejaVu Sans", sans-serif' font-size="10.667" text-anchor="middle" fill="#e6e6e6" font-weight="normal" >Tue 12:00</text>
<text x="1336.80" y="371.70" font-family='"DejaVu Sans", sans-serif' font-size="10.667" text-anchor="end" fill="#e6e6e6" font-weight="normal" >1.00/s</text>
<text x="1336.80" y="392.65" font-family='"DejaVu Sans", sans-serif' font-size="10.667" text-anchor="end" fill="#e6e6e6" font-weight="normal" >0.750/s</text>
<text x="1336.80" y="413.60" font-family='"DejaVu Sans", sans-serif' font-size="10.667" text-anchor="end" fill="#e6e6e6" font-weight="normal" >0.500/s</text>
<text x="1336.80" y="434.55" font-family='"DejaVu Sans", sans-serif' font-size="10.667" text-anchor="end" fill="#e6e6e6" font-weight="normal" >0.250/s</text>
<text x="1336.80" y="455.50" font-family='"DejaVu Sans", sans-serif' font-size="10.667" text-anchor="end" fill="#e6e6e6" font-weight="normal" >0</text>
<text x="1336.80" y="476.45" font-family='"DejaVu Sans", sans-serif' font-size="10.667" text-anchor="end" fill="#e6e6e6" font-weight="normal" >0.250/s</text>
<text x="1336.80" y="497.40" font-family='"DejaVu Sans", sans-serif' font-size="10.667" text-anchor="end" fill="#e6e6e6" font-weight="normal" >0.500/s</text>
<text x="1336.80" y="518.35" font-family='"DejaVu Sans", sans-serif' font-size="10.667" text-anchor="end" fill="#e6e6e6" font-weight="normal" >0.750/s</text>
<text x="1336.80" y="539.30" font-family='"DejaVu Sans", sans-serif' font-size="10.667" text-anchor="end" fill="#e6e6e6" font-weight="normal" >1.00/s</text>
<line x1="1400.50" y1="364.1" x2="1400.50" y2="541.6" stroke="rgba(130,160,190,0.27)" stroke-width="1"/>
<line x1="1525.30" y1="364.1" x2="1525.30" y2="541.6" stroke="rgba(130,160,190,0.27)" stroke-width="1"/>
<line x1="1649.90" y1="364.1" x2="1649.90" y2="541.6" stroke="rgba(130,160,190,0.27)" stroke-width="1"/>
<line x1="1774.70" y1="364.1" x2="1774.70" y2="541.6" stroke="rgba(130,160,190,0.27)" stroke-width="1"/>
<line x1="1342" y1="368.90" x2="1861" y2="368.90" stroke="rgba(130,160,190,0.27)" stroke-width="1"/>
<line x1="1342" y1="389.85" x2="1861" y2="389.85" stroke="rgba(130,160,190,0.27)" stroke-width="1"/>
<line x1="1342" y1="410.80" x2="1861" y2="410.80" stroke="rgba(130,160,190,0.27)" stroke-width="1"/>
<line x1="1342" y1="431.75" x2="1861" y2="431.75" stroke="rgba(130,160,190,0.27)" stroke-width="1"/>
<line x1="1342" y1="452.70" x2="1861" y2="452.70" stroke="rgba(130,160,190,0.27)" stroke-width="1"/>
<line x1="1342" y1="473.65" x2="1861" y2="473.65" stroke="rgba(130,160,190,0.27)" stroke-width="1"/>
<line x1="1342" y1="494.60" x2="1861" y2="494.60" stroke="rgba(130,160,190,0.27)" stroke-width="1"/>
<line x1="1342" y1="515.55" x2="1861" y2="515.55" stroke="rgba(130,160,190,0.27)" stroke-width="1"/>
<line x1="1342" y1="536.50" x2="1861" y2="536.50" stroke="rgba(130,160,190,0.27)" stroke-width="1"/>
<rect x="1342" y="451.6" width="519" height="1.9" fill="#e5545f"/>
<text x="200.70" y="784.60" font-family='"DejaVu Sans", sans-serif' font-size="10.667" text-anchor="middle" fill="#e6e6e6" font-weight="normal" >Mon 18:00</text>
<text x="325.50" y="784.60" font-family='"DejaVu Sans", sans-serif' font-size="10.667" text-anchor="middle" fill="#e6e6e6" font-weight="normal" >Tue 00:00</text>
<text x="450.10" y="784.60" font-family='"DejaVu Sans", sans-serif' font-size="10.667" text-anchor="middle" fill="#e6e6e6" font-weight="normal" >Tue 06:00</text>
<text x="574.90" y="784.60" font-family='"DejaVu Sans", sans-serif' font-size="10.667" text-anchor="middle" fill="#e6e6e6" font-weight="normal" >Tue 12:00</text>
<text x="136.80" y="620.30" font-family='"DejaVu Sans", sans-serif' font-size="10.667" text-anchor="end" fill="#e6e6e6" font-weight="normal" >250 ms</text>
<text x="136.80" y="651.13" font-family='"DejaVu Sans", sans-serif' font-size="10.667" text-anchor="end" fill="#e6e6e6" font-weight="normal" >200 ms</text>
<text x="136.80" y="681.96" font-family='"DejaVu Sans", sans-serif' font-size="10.667" text-anchor="end" fill="#e6e6e6" font-weight="normal" >150 ms</text>
<text x="136.80" y="712.79" font-family='"DejaVu Sans", sans-serif' font-size="10.667" text-anchor="end" fill="#e6e6e6" font-weight="normal" >100 ms</text>
<text x="136.80" y="743.62" font-family='"DejaVu Sans", sans-serif' font-size="10.667" text-anchor="end" fill="#e6e6e6" font-weight="normal" >50 ms</text>
<text x="136.80" y="773.95" font-family='"DejaVu Sans", sans-serif' font-size="10.667" text-anchor="end" fill="#e6e6e6" font-weight="normal" >0</text>
<line x1="200.50" y1="594.1" x2="200.50" y2="771.6" stroke="rgba(130,160,190,0.27)" stroke-width="1"/>
<line x1="325.30" y1="594.1" x2="325.30" y2="771.6" stroke="rgba(130,160,190,0.27)" stroke-width="1"/>
<line x1="449.90" y1="594.1" x2="449.90" y2="771.6" stroke="rgba(130,160,190,0.27)" stroke-width="1"/>
<line x1="574.70" y1="594.1" x2="574.70" y2="771.6" stroke="rgba(130,160,190,0.27)" stroke-width="1"/>
<line x1="142" y1="617.50" x2="661" y2="617.50" stroke="rgba(130,160,190,0.27)" stroke-width="1"/>
<line x1="142" y1="648.33" x2="661" y2="648.33" stroke="rgba(130,160,190,0.27)" stroke-width="1"/>
<line x1="142" y1="679.16" x2="661" y2="679.16" stroke="rgba(130,160,190,0.27)" stroke-width="1"/>
<line x1="142" y1="709.99" x2="661" y2="709.99" stroke="rgba(130,160,190,0.27)" stroke-width="1"/>
<line x1="142" y1="740.82" x2="661" y2="740.82" stroke="rgba(130,160,190,0.27)" stroke-width="1"/>
<line x1="142" y1="771.65" x2="661" y2="771.65" stroke="rgba(130,160,190,0.27)" stroke-width="1"/>
<polygon points="161.2,771.6 162.9,598.8 164.6,771.6" fill="#14478a" stroke="#0d7af5" stroke-width="1.1" stroke-linejoin="round"/>
<polygon points="142.4,771.8 142.4,771.5 153.2,771.1 155.1,769.9 157.1,771.5 160.2,771.1 167.9,771.1 170.1,768.9 171.7,771.1 174.2,769.9 176.1,771.1 179.6,770.8 181.8,771.5 190.1,770.5 192.0,771.5 195.5,770.2 197.7,771.5 206.0,770.8 211.4,770.8 213.6,771.5 228.9,771.1 232.0,766.1 233.9,771.1 255.9,771.1 263.2,765.7 264.8,771.5 274.9,770.8 278.1,767.0 280.3,771.5 287.6,770.8 290.2,769.9 292.4,771.5 304.5,770.8 313.1,770.5 315.3,771.5 320.4,770.8 321.9,766.7 323.9,771.5 331.8,771.1 333.7,767.0 335.6,771.1 345.8,770.8 348.0,768.0 350.2,770.8 355.0,769.9 357.5,771.5 382.9,770.8 403.0,771.1 422.7,771.1 430.6,770.2 432.8,771.5 438.5,770.8 458.2,771.1 460.2,767.0 462.7,767.0 464.6,771.5 471.0,770.8 473.5,769.2 475.4,770.8 477.6,768.6 480.5,770.8 505.3,771.1 506.9,770.2 509.1,771.5 518.0,770.8 524.3,770.8 533.9,770.8 542.8,770.2 545.3,771.5 552.9,770.8 565.6,770.8 578.3,771.1 597.4,770.5 599.9,771.1 606.9,770.5 613.9,769.6 615.8,770.8 618.1,769.6 620.3,770.8 626.0,770.5 633.9,770.8 638.7,768.9 640.6,771.1 646.6,770.2 648.9,771.1 657.8,770.8 660.9,771.5 660.9,771.8" fill="#14478a" fill-opacity="1"/>
<rect x="142" y="770.9" width="519" height="1.3" fill="#e8762a"/>
<polyline points="142.4,771.5 153.2,771.1 155.1,769.9 157.1,771.5 160.2,771.1 167.9,771.1 170.1,768.9 171.7,771.1 174.2,769.9 176.1,771.1 179.6,770.8 181.8,771.5 190.1,770.5 192.0,771.5 195.5,770.2 197.7,771.5 206.0,770.8 211.4,770.8 213.6,771.5 228.9,771.1 232.0,766.1 233.9,771.1 255.9,771.1 263.2,765.7 264.8,771.5 274.9,770.8 278.1,767.0 280.3,771.5 287.6,770.8 290.2,769.9 292.4,771.5 304.5,770.8 313.1,770.5 315.3,771.5 320.4,770.8 321.9,766.7 323.9,771.5 331.8,771.1 333.7,767.0 335.6,771.1 345.8,770.8 348.0,768.0 350.2,770.8 355.0,769.9 357.5,771.5 382.9,770.8 403.0,771.1 422.7,771.1 430.6,770.2 432.8,771.5 438.5,770.8 458.2,771.1 460.2,767.0 462.7,767.0 464.6,771.5 471.0,770.8 473.5,769.2 475.4,770.8 477.6,768.6 480.5,770.8 505.3,771.1 506.9,770.2 509.1,771.5 518.0,770.8 524.3,770.8 533.9,770.8 542.8,770.2 545.3,771.5 552.9,770.8 565.6,770.8 578.3,771.1 597.4,770.5 599.9,771.1 606.9,770.5 613.9,769.6 615.8,770.8 618.1,769.6 620.3,770.8 626.0,770.5 633.9,770.8 638.7,768.9 640.6,771.1 646.6,770.2 648.9,771.1 657.8,770.8 660.9,771.5" fill="none" stroke="#1b7df0" stroke-width="1.3" stroke-linejoin="round" />
<text x="1400.70" y="784.60" font-family='"DejaVu Sans", sans-serif' font-size="10.667" text-anchor="middle" fill="#e6e6e6" font-weight="normal" >Mon 18:00</text>
<text x="1525.50" y="784.60" font-family='"DejaVu Sans", sans-serif' font-size="10.667" text-anchor="middle" fill="#e6e6e6" font-weight="normal" >Tue 00:00</text>
<text x="1650.10" y="784.60" font-family='"DejaVu Sans", sans-serif' font-size="10.667" text-anchor="middle" fill="#e6e6e6" font-weight="normal" >Tue 06:00</text>
<text x="1774.90" y="784.60" font-family='"DejaVu Sans", sans-serif' font-size="10.667" text-anchor="middle" fill="#e6e6e6" font-weight="normal" >Tue 12:00</text>
<text x="1336.80" y="608.24" font-family='"DejaVu Sans", sans-serif' font-size="10.667" text-anchor="end" fill="#e6e6e6" font-weight="normal" >0.800/s</text>
<text x="1336.80" y="628.99" font-family='"DejaVu Sans", sans-serif' font-size="10.667" text-anchor="end" fill="#e6e6e6" font-weight="normal" >0.700/s</text>
<text x="1336.80" y="649.73" font-family='"DejaVu Sans", sans-serif' font-size="10.667" text-anchor="end" fill="#e6e6e6" font-weight="normal" >0.600/s</text>
<text x="1336.80" y="670.48" font-family='"DejaVu Sans", sans-serif' font-size="10.667" text-anchor="end" fill="#e6e6e6" font-weight="normal" >0.500/s</text>
<text x="1336.80" y="691.22" font-family='"DejaVu Sans", sans-serif' font-size="10.667" text-anchor="end" fill="#e6e6e6" font-weight="normal" >0.400/s</text>
<text x="1336.80" y="711.97" font-family='"DejaVu Sans", sans-serif' font-size="10.667" text-anchor="end" fill="#e6e6e6" font-weight="normal" >0.300/s</text>
<text x="1336.80" y="732.71" font-family='"DejaVu Sans", sans-serif' font-size="10.667" text-anchor="end" fill="#e6e6e6" font-weight="normal" >0.200/s</text>
<text x="1336.80" y="753.46" font-family='"DejaVu Sans", sans-serif' font-size="10.667" text-anchor="end" fill="#e6e6e6" font-weight="normal" >0.100/s</text>
<text x="1336.80" y="773.70" font-family='"DejaVu Sans", sans-serif' font-size="10.667" text-anchor="end" fill="#e6e6e6" font-weight="normal" >0</text>
<polygon points="1342.4,771.3 1342.4,741.1 1345.6,712.5 1347.8,731.6 1349.4,763.3 1353.2,769.7 1363.7,770.3 1365.9,765.9 1367.9,770.3 1376.4,769.7 1379.6,687.1 1382.8,690.3 1384.4,763.3 1386.9,764.9 1388.5,718.9 1390.7,714.1 1392.3,752.2 1394.5,699.8 1397.1,698.2 1398.4,685.5 1399.6,684.5 1400.9,755.4 1402.8,685.5 1405.0,682.3 1407.3,696.6 1409.2,685.5 1411.4,655.3 1413.6,654.7 1415.5,696.6 1418.1,652.8 1420.0,693.4 1422.5,690.3 1425.7,693.4 1428.9,703.0 1430.4,747.5 1432.0,718.9 1433.6,718.2 1435.2,768.1 1437.8,769.7 1439.0,725.2 1440.9,760.2 1443.2,757.0 1446.3,709.3 1452.7,690.3 1455.9,655.3 1458.1,696.6 1461.3,669.6 1463.2,695.0 1464.4,669.6 1467.0,695.0 1469.5,671.2 1472.1,693.4 1474.3,677.6 1476.5,685.5 1478.7,679.1 1481.3,763.3 1484.5,769.7 1490.8,769.7 1493.0,760.2 1494.9,758.6 1496.2,737.9 1498.8,704.6 1501.3,704.6 1502.9,728.4 1505.1,696.6 1508.3,690.3 1512.1,690.9 1516.2,715.7 1519.4,753.8 1521.6,758.6 1523.5,769.7 1527.3,763.3 1529.9,753.8 1532.1,714.1 1535.3,704.6 1537.5,731.6 1539.4,693.4 1540.7,693.4 1542.6,750.6 1545.1,761.7 1548.0,769.7 1551.2,766.5 1554.4,769.7 1560.7,769.1 1563.9,770.3 1567.1,768.1 1568.6,763.3 1570.2,763.3 1571.8,722.0 1573.4,725.2 1575.0,744.3 1577.5,703.0 1579.8,695.0 1582.9,674.4 1584.5,672.8 1586.1,699.8 1587.7,679.1 1589.3,699.8 1590.9,672.8 1592.8,673.7 1594.7,699.8 1596.3,768.1 1600.4,769.1 1606.8,770.3 1613.1,769.7 1619.5,770.3 1632.2,770.3 1635.4,768.1 1640.1,768.1 1641.7,763.3 1643.0,687.1 1644.3,763.3 1646.5,768.1 1649.7,767.1 1652.8,769.7 1664.0,770.3 1667.1,768.4 1675.1,768.4 1676.7,770.3 1681.4,769.7 1683.0,765.9 1686.2,765.9 1688.7,770.3 1705.3,770.3 1708.4,763.3 1710.3,707.7 1712.3,712.5 1714.2,736.3 1716.1,723.6 1718.0,733.2 1719.9,741.1 1721.8,763.3 1724.3,769.1 1730.7,770.3 1772.0,770.3 1775.8,768.1 1777.7,770.3 1791.0,770.3 1793.3,768.1 1794.9,770.3 1799.0,770.3 1801.2,768.1 1803.8,768.1 1805.7,770.3 1810.1,769.7 1812.0,693.4 1813.9,695.0 1815.2,761.7 1817.1,763.3 1819.0,699.8 1820.9,728.4 1822.2,699.8 1824.4,687.1 1826.0,676.9 1827.9,699.8 1829.2,763.3 1831.1,769.7 1837.1,770.3 1838.7,763.3 1840.6,709.3 1842.8,695.0 1845.1,693.4 1846.3,750.6 1848.2,768.1 1851.4,770.3 1853.3,750.6 1855.2,688.7 1857.1,696.6 1858.7,693.4 1860.3,599.7 1860.3,771.3" fill="#2f566b" fill-opacity="1"/>
<polygon points="1342.4,741.1 1345.6,712.5 1347.8,731.6 1349.4,763.3 1353.2,769.7 1363.7,770.3 1365.9,765.9 1367.9,770.3 1376.4,769.7 1379.6,687.1 1382.8,690.3 1384.4,763.3 1386.9,764.9 1388.5,718.9 1390.7,714.1 1392.3,752.2 1394.5,699.8 1397.1,698.2 1398.4,685.5 1399.6,684.5 1400.9,755.4 1402.8,685.5 1405.0,682.3 1407.3,696.6 1409.2,685.5 1411.4,655.3 1413.6,654.7 1415.5,696.6 1418.1,652.8 1420.0,693.4 1422.5,690.3 1425.7,693.4 1428.9,703.0 1430.4,747.5 1432.0,718.9 1433.6,718.2 1435.2,768.1 1437.8,769.7 1439.0,725.2 1440.9,760.2 1443.2,757.0 1446.3,709.3 1452.7,690.3 1455.9,655.3 1458.1,696.6 1461.3,669.6 1463.2,695.0 1464.4,669.6 1467.0,695.0 1469.5,671.2 1472.1,693.4 1474.3,677.6 1476.5,685.5 1478.7,679.1 1481.3,763.3 1484.5,769.7 1490.8,769.7 1493.0,760.2 1494.9,758.6 1496.2,737.9 1498.8,704.6 1501.3,704.6 1502.9,728.4 1505.1,696.6 1508.3,690.3 1512.1,690.9 1516.2,715.7 1519.4,753.8 1521.6,758.6 1523.5,769.7 1527.3,763.3 1529.9,753.8 1532.1,714.1 1535.3,704.6 1537.5,731.6 1539.4,693.4 1540.7,693.4 1542.6,750.6 1545.1,761.7 1548.0,769.7 1551.2,766.5 1554.4,769.7 1560.7,769.1 1563.9,770.3 1567.1,768.1 1568.6,763.3 1570.2,763.3 1571.8,722.0 1573.4,725.2 1575.0,744.3 1577.5,703.0 1579.8,695.0 1582.9,674.4 1584.5,672.8 1586.1,699.8 1587.7,679.1 1589.3,699.8 1590.9,672.8 1592.8,673.7 1594.7,699.8 1596.3,768.1 1600.4,769.1 1606.8,770.3 1613.1,769.7 1619.5,770.3 1632.2,770.3 1635.4,768.1 1640.1,768.1 1641.7,763.3 1643.0,687.1 1644.3,763.3 1646.5,768.1 1649.7,767.1 1652.8,769.7 1664.0,770.3 1667.1,768.4 1675.1,768.4 1676.7,770.3 1681.4,769.7 1683.0,765.9 1686.2,765.9 1688.7,770.3 1705.3,770.3 1708.4,763.3 1710.3,707.7 1712.3,712.5 1714.2,736.3 1716.1,723.6 1718.0,733.2 1719.9,741.1 1721.8,763.3 1724.3,769.1 1730.7,770.3 1772.0,770.3 1775.8,768.1 1777.7,770.3 1791.0,770.3 1793.3,768.1 1794.9,770.3 1799.0,770.3 1801.2,768.1 1803.8,768.1 1805.7,770.3 1810.1,769.7 1812.0,693.4 1813.9,695.0 1815.2,761.7 1817.1,763.3 1819.0,699.8 1820.9,728.4 1822.2,699.8 1824.4,687.1 1826.0,676.9 1827.9,699.8 1829.2,763.3 1831.1,769.7 1837.1,770.3 1838.7,763.3 1840.6,709.3 1842.8,695.0 1845.1,693.4 1846.3,750.6 1848.2,768.1 1851.4,770.3 1853.3,750.6 1855.2,688.7 1857.1,696.6 1858.7,693.4 1860.3,599.7 1860.3,606.7 1858.7,698.2 1857.1,701.4 1855.2,693.8 1853.3,752.9 1851.4,770.3 1848.2,768.1 1846.3,752.7 1845.1,699.9 1842.8,700.5 1840.6,715.8 1838.7,764.9 1837.1,770.3 1831.1,769.7 1829.2,764.8 1827.9,705.0 1826.0,683.0 1824.4,694.1 1822.2,706.2 1820.9,731.4 1819.0,705.0 1817.1,764.7 1815.2,763.2 1813.9,699.5 1812.0,698.8 1810.1,769.7 1805.7,770.3 1803.8,768.1 1801.2,768.1 1799.0,770.3 1794.9,770.3 1793.3,768.1 1791.0,770.3 1777.7,770.3 1775.8,768.1 1772.0,770.3 1730.7,770.3 1724.3,769.1 1721.8,764.4 1719.9,744.0 1718.0,736.2 1716.1,726.8 1714.2,738.7 1712.3,716.1 1710.3,713.5 1708.4,764.3 1705.3,770.3 1688.7,770.3 1686.2,765.9 1683.0,765.9 1681.4,769.7 1676.7,770.3 1675.1,768.4 1667.1,768.4 1664.0,770.3 1652.8,769.7 1649.7,767.1 1646.5,768.1 1644.3,765.1 1643.0,694.1 1641.7,764.6 1640.1,768.1 1635.4,768.1 1632.2,770.3 1619.5,770.3 1613.1,769.7 1606.8,770.3 1600.4,769.1 1596.3,768.1 1594.7,705.7 1592.8,680.4 1590.9,679.8 1589.3,704.3 1587.7,686.1 1586.1,706.6 1584.5,679.8 1582.9,679.8 1579.8,699.9 1577.5,707.6 1575.0,746.8 1573.4,728.4 1571.8,725.2 1570.2,765.0 1568.6,765.0 1567.1,768.1 1563.9,770.3 1560.7,769.1 1554.4,769.7 1551.2,766.5 1548.0,769.7 1545.1,763.3 1542.6,752.8 1540.7,699.1 1539.4,699.5 1537.5,734.8 1535.3,710.9 1532.1,718.2 1529.9,755.5 1527.3,764.6 1523.5,769.7 1521.6,760.4 1519.4,755.5 1516.2,719.6 1512.1,696.6 1508.3,697.1 1505.1,702.4 1502.9,731.3 1501.3,708.6 1498.8,710.9 1496.2,740.9 1494.9,759.9 1493.0,761.7 1490.8,769.7 1484.5,769.7 1481.3,765.0 1478.7,685.6 1476.5,690.7 1474.3,684.5 1472.1,698.2 1469.5,677.0 1467.0,699.6 1464.4,675.6 1463.2,700.9 1461.3,675.8 1458.1,701.8 1455.9,662.3 1452.7,695.5 1446.3,714.5 1443.2,758.9 1440.9,761.5 1439.0,728.4 1437.8,769.7 1435.2,768.1 1433.6,721.9 1432.0,722.5 1430.4,749.7 1428.9,707.4 1425.7,700.2 1422.5,697.3 1420.0,699.9 1418.1,659.8 1415.5,703.0 1413.6,661.7 1411.4,662.3 1409.2,691.3 1407.3,701.9 1405.0,689.3 1402.8,692.5 1400.9,757.2 1399.6,691.2 1398.4,691.9 1397.1,704.3 1394.5,705.3 1392.3,753.9 1390.7,717.8 1388.5,722.5 1386.9,764.9 1384.4,764.3 1382.8,695.5 1379.6,693.8 1376.4,769.7 1367.9,770.3 1365.9,765.9 1363.7,770.3 1353.2,769.7 1349.4,764.5 1347.8,734.3 1345.6,716.1 1342.4,744.0" fill="#5a4c78"/>
<polygon points="1342.4,771.3 1342.4,767.1 1347.8,768.1 1351.0,770.3 1376.4,770.3 1379.6,763.3 1382.8,763.3 1386.9,769.7 1392.3,764.9 1397.1,765.9 1400.9,763.3 1409.8,762.7 1416.1,763.3 1422.5,764.9 1428.9,766.5 1435.2,769.7 1441.6,768.1 1446.3,766.5 1454.3,763.3 1460.6,762.4 1473.3,762.4 1479.7,764.9 1482.2,769.7 1492.4,769.7 1497.2,767.1 1503.5,764.9 1514.6,764.9 1521.0,769.7 1525.8,769.7 1532.1,765.9 1540.1,764.9 1543.2,765.2 1545.1,769.7 1568.6,769.7 1575.0,766.5 1584.5,764.9 1594.1,763.3 1596.3,769.7 1640.1,769.7 1642.4,763.3 1644.9,768.1 1649.7,769.7 1708.4,769.7 1711.0,764.9 1714.8,766.5 1721.2,769.1 1724.3,770.3 1810.1,770.3 1812.0,763.3 1815.2,768.1 1819.0,763.3 1824.4,764.0 1827.9,763.3 1829.8,769.7 1838.7,769.7 1841.9,762.7 1845.7,763.3 1848.2,769.7 1853.3,768.1 1856.2,763.3 1860.3,760.2 1860.3,771.3" fill="#662e35" fill-opacity="1"/>
<line x1="1400.50" y1="594.1" x2="1400.50" y2="771.6" stroke="rgba(130,160,190,0.27)" stroke-width="1"/>
<line x1="1525.30" y1="594.1" x2="1525.30" y2="771.6" stroke="rgba(130,160,190,0.27)" stroke-width="1"/>
<line x1="1649.90" y1="594.1" x2="1649.90" y2="771.6" stroke="rgba(130,160,190,0.27)" stroke-width="1"/>
<line x1="1774.70" y1="594.1" x2="1774.70" y2="771.6" stroke="rgba(130,160,190,0.27)" stroke-width="1"/>
<line x1="1342" y1="605.44" x2="1861" y2="605.44" stroke="rgba(130,160,190,0.27)" stroke-width="1"/>
<line x1="1342" y1="626.19" x2="1861" y2="626.19" stroke="rgba(130,160,190,0.27)" stroke-width="1"/>
<line x1="1342" y1="646.93" x2="1861" y2="646.93" stroke="rgba(130,160,190,0.27)" stroke-width="1"/>
<line x1="1342" y1="667.68" x2="1861" y2="667.68" stroke="rgba(130,160,190,0.27)" stroke-width="1"/>
<line x1="1342" y1="688.42" x2="1861" y2="688.42" stroke="rgba(130,160,190,0.27)" stroke-width="1"/>
<line x1="1342" y1="709.17" x2="1861" y2="709.17" stroke="rgba(130,160,190,0.27)" stroke-width="1"/>
<line x1="1342" y1="729.91" x2="1861" y2="729.91" stroke="rgba(130,160,190,0.27)" stroke-width="1"/>
<line x1="1342" y1="750.66" x2="1861" y2="750.66" stroke="rgba(130,160,190,0.27)" stroke-width="1"/>
<line x1="1342" y1="771.40" x2="1861" y2="771.40" stroke="rgba(130,160,190,0.27)" stroke-width="1"/>
<polyline points="1342.4,744.0 1345.6,716.1 1347.8,734.3 1349.4,764.5 1353.2,769.7 1363.7,770.3 1365.9,765.9 1367.9,770.3 1376.4,769.7 1379.6,693.8 1382.8,695.5 1384.4,764.3 1386.9,764.9 1388.5,722.5 1390.7,717.8 1392.3,753.9 1394.5,705.3 1397.1,704.3 1398.4,691.9 1399.6,691.2 1400.9,757.2 1402.8,692.5 1405.0,689.3 1407.3,701.9 1409.2,691.3 1411.4,662.3 1413.6,661.7 1415.5,703.0 1418.1,659.8 1420.0,699.9 1422.5,697.3 1425.7,700.2 1428.9,707.4 1430.4,749.7 1432.0,722.5 1433.6,721.9 1435.2,768.1 1437.8,769.7 1439.0,728.4 1440.9,761.5 1443.2,758.9 1446.3,714.5 1452.7,695.5 1455.9,662.3 1458.1,701.8 1461.3,675.8 1463.2,700.9 1464.4,675.6 1467.0,699.6 1469.5,677.0 1472.1,698.2 1474.3,684.5 1476.5,690.7 1478.7,685.6 1481.3,765.0 1484.5,769.7 1490.8,769.7 1493.0,761.7 1494.9,759.9 1496.2,740.9 1498.8,710.9 1501.3,708.6 1502.9,731.3 1505.1,702.4 1508.3,697.1 1512.1,696.6 1516.2,719.6 1519.4,755.5 1521.6,760.4 1523.5,769.7 1527.3,764.6 1529.9,755.5 1532.1,718.2 1535.3,710.9 1537.5,734.8 1539.4,699.5 1540.7,699.1 1542.6,752.8 1545.1,763.3 1548.0,769.7 1551.2,766.5 1554.4,769.7 1560.7,769.1 1563.9,770.3 1567.1,768.1 1568.6,765.0 1570.2,765.0 1571.8,725.2 1573.4,728.4 1575.0,746.8 1577.5,707.6 1579.8,699.9 1582.9,679.8 1584.5,679.8 1586.1,706.6 1587.7,686.1 1589.3,704.3 1590.9,679.8 1592.8,680.4 1594.7,705.7 1596.3,768.1 1600.4,769.1 1606.8,770.3 1613.1,769.7 1619.5,770.3 1632.2,770.3 1635.4,768.1 1640.1,768.1 1641.7,764.6 1643.0,694.1 1644.3,765.1 1646.5,768.1 1649.7,767.1 1652.8,769.7 1664.0,770.3 1667.1,768.4 1675.1,768.4 1676.7,770.3 1681.4,769.7 1683.0,765.9 1686.2,765.9 1688.7,770.3 1705.3,770.3 1708.4,764.3 1710.3,713.5 1712.3,716.1 1714.2,738.7 1716.1,726.8 1718.0,736.2 1719.9,744.0 1721.8,764.4 1724.3,769.1 1730.7,770.3 1772.0,770.3 1775.8,768.1 1777.7,770.3 1791.0,770.3 1793.3,768.1 1794.9,770.3 1799.0,770.3 1801.2,768.1 1803.8,768.1 1805.7,770.3 1810.1,769.7 1812.0,698.8 1813.9,699.5 1815.2,763.2 1817.1,764.7 1819.0,705.0 1820.9,731.4 1822.2,706.2 1824.4,694.1 1826.0,683.0 1827.9,705.0 1829.2,764.8 1831.1,769.7 1837.1,770.3 1838.7,764.9 1840.6,715.8 1842.8,700.5 1845.1,699.9 1846.3,752.7 1848.2,768.1 1851.4,770.3 1853.3,752.9 1855.2,693.8 1857.1,701.4 1858.7,698.2 1860.3,606.7" fill="none" stroke="#8e9ae6" stroke-width="0.9" stroke-linejoin="round" />
<polyline points="1342.4,767.1 1347.8,768.1 1351.0,770.3 1376.4,770.3 1379.6,763.3 1382.8,763.3 1386.9,769.7 1392.3,764.9 1397.1,765.9 1400.9,763.3 1409.8,762.7 1416.1,763.3 1422.5,764.9 1428.9,766.5 1435.2,769.7 1441.6,768.1 1446.3,766.5 1454.3,763.3 1460.6,762.4 1473.3,762.4 1479.7,764.9 1482.2,769.7 1492.4,769.7 1497.2,767.1 1503.5,764.9 1514.6,764.9 1521.0,769.7 1525.8,769.7 1532.1,765.9 1540.1,764.9 1543.2,765.2 1545.1,769.7 1568.6,769.7 1575.0,766.5 1584.5,764.9 1594.1,763.3 1596.3,769.7 1640.1,769.7 1642.4,763.3 1644.9,768.1 1649.7,769.7 1708.4,769.7 1711.0,764.9 1714.8,766.5 1721.2,769.1 1724.3,770.3 1810.1,770.3 1812.0,763.3 1815.2,768.1 1819.0,763.3 1824.4,764.0 1827.9,763.3 1829.8,769.7 1838.7,769.7 1841.9,762.7 1845.7,763.3 1848.2,769.7 1853.3,768.1 1856.2,763.3 1860.3,760.2" fill="none" stroke="#6450e6" stroke-width="1.1" stroke-linejoin="round" />
<polyline points="1342.4,741.1 1345.6,712.5 1347.8,731.6 1349.4,763.3 1353.2,769.7 1363.7,770.3 1365.9,765.9 1367.9,770.3 1376.4,769.7 1379.6,687.1 1382.8,690.3 1384.4,763.3 1386.9,764.9 1388.5,718.9 1390.7,714.1 1392.3,752.2 1394.5,699.8 1397.1,698.2 1398.4,685.5 1399.6,684.5 1400.9,755.4 1402.8,685.5 1405.0,682.3 1407.3,696.6 1409.2,685.5 1411.4,655.3 1413.6,654.7 1415.5,696.6 1418.1,652.8 1420.0,693.4 1422.5,690.3 1425.7,693.4 1428.9,703.0 1430.4,747.5 1432.0,718.9 1433.6,718.2 1435.2,768.1 1437.8,769.7 1439.0,725.2 1440.9,760.2 1443.2,757.0 1446.3,709.3 1452.7,690.3 1455.9,655.3 1458.1,696.6 1461.3,669.6 1463.2,695.0 1464.4,669.6 1467.0,695.0 1469.5,671.2 1472.1,693.4 1474.3,677.6 1476.5,685.5 1478.7,679.1 1481.3,763.3 1484.5,769.7 1490.8,769.7 1493.0,760.2 1494.9,758.6 1496.2,737.9 1498.8,704.6 1501.3,704.6 1502.9,728.4 1505.1,696.6 1508.3,690.3 1512.1,690.9 1516.2,715.7 1519.4,753.8 1521.6,758.6 1523.5,769.7 1527.3,763.3 1529.9,753.8 1532.1,714.1 1535.3,704.6 1537.5,731.6 1539.4,693.4 1540.7,693.4 1542.6,750.6 1545.1,761.7 1548.0,769.7 1551.2,766.5 1554.4,769.7 1560.7,769.1 1563.9,770.3 1567.1,768.1 1568.6,763.3 1570.2,763.3 1571.8,722.0 1573.4,725.2 1575.0,744.3 1577.5,703.0 1579.8,695.0 1582.9,674.4 1584.5,672.8 1586.1,699.8 1587.7,679.1 1589.3,699.8 1590.9,672.8 1592.8,673.7 1594.7,699.8 1596.3,768.1 1600.4,769.1 1606.8,770.3 1613.1,769.7 1619.5,770.3 1632.2,770.3 1635.4,768.1 1640.1,768.1 1641.7,763.3 1643.0,687.1 1644.3,763.3 1646.5,768.1 1649.7,767.1 1652.8,769.7 1664.0,770.3 1667.1,768.4 1675.1,768.4 1676.7,770.3 1681.4,769.7 1683.0,765.9 1686.2,765.9 1688.7,770.3 1705.3,770.3 1708.4,763.3 1710.3,707.7 1712.3,712.5 1714.2,736.3 1716.1,723.6 1718.0,733.2 1719.9,741.1 1721.8,763.3 1724.3,769.1 1730.7,770.3 1772.0,770.3 1775.8,768.1 1777.7,770.3 1791.0,770.3 1793.3,768.1 1794.9,770.3 1799.0,770.3 1801.2,768.1 1803.8,768.1 1805.7,770.3 1810.1,769.7 1812.0,693.4 1813.9,695.0 1815.2,761.7 1817.1,763.3 1819.0,699.8 1820.9,728.4 1822.2,699.8 1824.4,687.1 1826.0,676.9 1827.9,699.8 1829.2,763.3 1831.1,769.7 1837.1,770.3 1838.7,763.3 1840.6,709.3 1842.8,695.0 1845.1,693.4 1846.3,750.6 1848.2,768.1 1851.4,770.3 1853.3,750.6 1855.2,688.7 1857.1,696.6 1858.7,693.4 1860.3,599.7" fill="none" stroke="#5fdcea" stroke-width="1.15" stroke-linejoin="round" />
<text x="973.50" y="583.00" font-family='"Liberation Sans", sans-serif' font-size="12" text-anchor="middle" fill="#fff" font-weight="normal" letter-spacing="1.7">I/O-wait</text>
<rect x="743" y="599" width="517.5" height="1" fill="rgba(130,160,190,0.23)"/>
<rect x="743" y="626" width="517.5" height="1" fill="rgba(130,160,190,0.23)"/>
<rect x="743" y="652" width="517.5" height="1" fill="rgba(130,160,190,0.23)"/>
<rect x="743" y="679" width="517.5" height="1" fill="rgba(130,160,190,0.23)"/>
<rect x="743" y="706" width="517.5" height="1" fill="rgba(130,160,190,0.23)"/>
<rect x="743" y="732" width="517.5" height="1" fill="rgba(130,160,190,0.23)"/>
<rect x="743" y="759" width="517.5" height="1" fill="rgba(130,160,190,0.23)"/>
<rect x="743" y="599" width="1" height="161" fill="rgba(130,160,190,0.23)"/>
<text x="743.70" y="776.80" font-family='"DejaVu Sans", sans-serif' font-size="12.5" text-anchor="middle" fill="#e6e6e6" font-weight="normal" >03-29</text>
<rect x="839" y="599" width="1" height="161" fill="rgba(130,160,190,0.23)"/>
<text x="839.40" y="776.80" font-family='"DejaVu Sans", sans-serif' font-size="12.5" text-anchor="middle" fill="#e6e6e6" font-weight="normal" >03:00</text>
<rect x="935" y="599" width="1" height="161" fill="rgba(130,160,190,0.23)"/>
<text x="935.10" y="776.80" font-family='"DejaVu Sans", sans-serif' font-size="12.5" text-anchor="middle" fill="#e6e6e6" font-weight="normal" >06:00</text>
<rect x="1030" y="599" width="1" height="161" fill="rgba(130,160,190,0.23)"/>
<text x="1030.80" y="776.80" font-family='"DejaVu Sans", sans-serif' font-size="12.5" text-anchor="middle" fill="#e6e6e6" font-weight="normal" >09:00</text>
<rect x="1126" y="599" width="1" height="161" fill="rgba(130,160,190,0.23)"/>
<text x="1126.50" y="776.80" font-family='"DejaVu Sans", sans-serif' font-size="12.5" text-anchor="middle" fill="#e6e6e6" font-weight="normal" >12:00</text>
<rect x="1222" y="599" width="1" height="161" fill="rgba(130,160,190,0.23)"/>
<text x="1222.20" y="776.80" font-family='"DejaVu Sans", sans-serif' font-size="12.5" text-anchor="middle" fill="#e6e6e6" font-weight="normal" >15:00</text>
<text x="733.10" y="603.10" font-family='"DejaVu Sans", sans-serif' font-size="12.4" text-anchor="end" fill="#e6e6e6" font-weight="normal" >1.50%</text>
<text x="733.10" y="656.44" font-family='"DejaVu Sans", sans-serif' font-size="12.4" text-anchor="end" fill="#e6e6e6" font-weight="normal" >1%</text>
<text x="733.10" y="709.78" font-family='"DejaVu Sans", sans-serif' font-size="12.4" text-anchor="end" fill="#e6e6e6" font-weight="normal" >0.50%</text>
<text x="733.10" y="763.12" font-family='"DejaVu Sans", sans-serif' font-size="12.4" text-anchor="end" fill="#e6e6e6" font-weight="normal" >0%</text>
<polyline points="743.7,731.6 745.6,742.2 747.3,743.6 748.9,741.5 750.6,742.6 752.2,740.9 753.9,744.0 755.5,741.6 757.2,744.4 758.8,742.3 760.5,742.1 762.1,736.3 763.8,742.9 765.4,742.3 767.1,741.1 768.7,741.1 770.4,745.9 772.0,742.5 773.7,741.2 775.4,741.8 777.0,743.5 778.0,720.4 779.6,725.2 782.0,745.7 783.6,743.5 785.3,743.1 786.9,745.4 788.6,743.0 790.2,741.1 791.9,743.9 793.5,744.5 795.2,744.3 796.8,742.4 798.5,746.1 800.1,745.7 801.8,746.5 803.4,743.3 805.1,743.0 806.7,742.4 808.4,739.2 810.0,738.4 811.4,733.2 813.4,738.9 815.0,738.7 816.7,740.3 818.3,742.5 820.0,740.0 821.6,741.2 823.3,738.3 824.9,739.4 827.3,734.7 829.9,741.3 831.5,742.9 833.2,742.8 834.8,742.4 836.5,743.1 838.1,745.4 839.8,745.5 841.4,745.2 843.2,730.9 844.7,741.4 846.4,746.2 848.0,743.1 849.7,744.8 851.4,742.2 853.0,746.0 854.7,740.9 856.3,744.1 858.0,742.1 859.6,743.0 861.3,742.9 862.9,744.5 864.6,745.4 866.2,742.9 867.9,744.4 869.5,742.8 871.2,742.4 872.8,746.0 874.5,742.6 876.1,741.3 877.8,742.7 879.4,745.0 881.1,742.0 882.7,745.0 884.4,743.9 886.0,744.7 887.7,741.8 889.3,741.4 891.0,741.6 892.7,742.8 894.3,743.2 896.0,740.8 897.6,743.7 899.3,743.1 900.9,742.6 902.6,743.9 904.2,746.2 905.9,741.9 907.5,745.8 909.2,742.6 910.8,745.1 912.5,741.4 914.1,746.4 915.8,743.2 917.4,746.3 919.1,742.0 920.7,743.1 922.4,744.8 924.0,741.8 925.7,742.3 927.3,735.4 929.0,746.2 930.7,742.6 932.3,741.8 934.0,742.8 935.6,746.4 937.3,741.6 938.9,744.4 940.6,742.9 942.6,742.7 943.9,697.3 945.8,697.3 946.7,741.1 948.6,642.0 949.9,687.1 951.2,744.3 953.8,744.0 955.4,741.4 957.1,745.6 959.1,734.1 960.4,743.4 962.0,744.6 963.7,743.2 965.3,743.0 967.0,742.1 968.6,744.2 970.3,744.1 972.0,743.7 973.6,741.0 975.0,737.3 976.9,743.3 978.6,744.2 980.2,744.2 981.9,746.1 983.5,741.6 985.2,743.5 986.8,746.5 988.5,745.0 990.1,742.6 991.8,745.0 993.4,746.4 995.1,743.1 996.7,745.7 998.4,741.5 1000.0,746.4 1001.7,741.0 1003.3,739.6 1005.0,743.0 1006.6,741.9 1008.3,743.6 1010.0,743.0 1011.6,742.8 1013.3,741.2 1014.9,743.9 1016.3,735.4 1018.2,743.2 1019.9,744.8 1021.5,742.2 1022.7,737.9 1024.8,743.4 1026.5,743.8 1028.1,745.7 1029.8,741.9 1031.4,742.4 1033.1,744.5 1034.7,741.2 1036.4,744.0 1038.0,745.3 1039.7,743.6 1041.7,737.3 1043.0,745.4 1044.6,745.7 1046.3,745.2 1048.0,743.9 1049.6,746.0 1051.3,745.3 1052.9,741.6 1054.6,742.9 1056.2,741.4 1057.9,741.0 1059.5,742.8 1061.2,745.7 1062.8,745.5 1064.5,741.4 1066.1,741.8 1067.8,743.0 1069.4,745.6 1071.1,744.3 1073.5,736.3 1076.0,746.4 1077.7,742.0 1079.3,744.4 1081.0,745.8 1082.6,744.9 1084.3,741.9 1085.9,744.6 1087.6,743.2 1089.4,735.4 1090.9,742.7 1092.6,742.6 1094.2,744.4 1095.9,742.4 1097.5,744.2 1099.2,744.8 1100.8,741.8 1102.5,741.5 1104.1,744.7 1105.8,743.4 1106.9,734.1 1109.1,741.4 1110.7,746.2 1112.4,744.3 1114.0,742.8 1115.7,741.9 1117.3,746.5 1119.0,744.7 1120.6,745.0 1122.7,737.3 1123.9,742.6 1125.6,743.1 1127.3,741.6 1128.9,744.4 1130.6,743.2 1132.2,745.5 1133.9,743.1 1135.5,743.4 1137.2,743.7 1138.8,746.2 1140.5,742.8 1142.1,744.8 1143.8,742.1 1145.4,744.1 1147.1,742.4 1148.2,734.7 1150.4,742.4 1152.0,745.7 1153.7,744.6 1155.3,743.4 1157.0,746.1 1158.6,743.0 1160.3,745.0 1161.9,744.2 1163.6,743.3 1165.3,741.1 1166.9,743.2 1168.6,742.4 1170.4,737.3 1171.9,746.2 1173.5,742.5 1175.2,744.8 1176.8,744.6 1178.5,742.2 1180.1,743.1 1181.8,741.5 1183.4,745.9 1185.1,742.2 1186.7,743.2 1187.9,737.3 1190.0,745.5 1191.7,745.6 1193.3,744.2 1195.0,743.9 1196.6,741.3 1198.3,745.9 1199.9,741.3 1201.6,742.9 1203.2,742.9 1204.4,725.8 1206.6,744.6 1208.2,742.7 1209.9,745.9 1212.0,716.3 1213.2,740.9 1214.8,744.4 1216.5,743.5 1218.1,742.8 1219.6,736.3 1221.4,742.6 1223.1,744.6 1224.7,744.2 1226.4,746.3 1228.0,746.4 1229.7,746.5 1231.3,743.0 1233.0,745.5 1234.6,744.5 1237.1,738.6 1239.6,741.2 1241.2,743.4 1242.9,743.1 1244.6,744.5 1246.2,742.0 1247.9,746.4 1249.5,742.0 1251.2,742.9 1252.8,741.6 1254.5,743.0 1256.1,745.0 1257.8,750.0 1257.8,741.3 1259.4,741.7 1260.0,742.7" fill="none" stroke="#3dbfff" stroke-width="2.0" stroke-linejoin="round" />
<rect x="1149.2" y="587.3" width="115" height="51.7" rx="5" fill="#212730" fill-opacity="0.92"/>
<rect x="1153.9" y="598.1" width="6.1" height="5.8" rx="1.3" fill="#1665b8"/>
<text x="1163.70" y="602.80" font-family='"Liberation Sans", sans-serif' font-size="11.5" text-anchor="start" fill="#e2e2e2" font-weight="normal" letter-spacing="0.97">Mean I/O-wait</text>
<rect x="1153.9" y="612.0" width="6.1" height="5.8" rx="1.3" fill="#3dc3ff"/>
<text x="1163.70" y="616.70" font-family='"Liberation Sans", sans-serif' font-size="11.5" text-anchor="start" fill="#e2e2e2" font-weight="normal" letter-spacing="0.97">Median I/O-wait</text>
<rect x="1153.9" y="625.9" width="6.1" height="5.8" rx="1.3" fill="#08b4c4"/>
<text x="1163.70" y="630.60" font-family='"Liberation Sans", sans-serif' font-size="11.5" text-anchor="start" fill="#e2e2e2" font-weight="normal" letter-spacing="0.97">I/O-wait by host</text>
</svg>

</body></html>
